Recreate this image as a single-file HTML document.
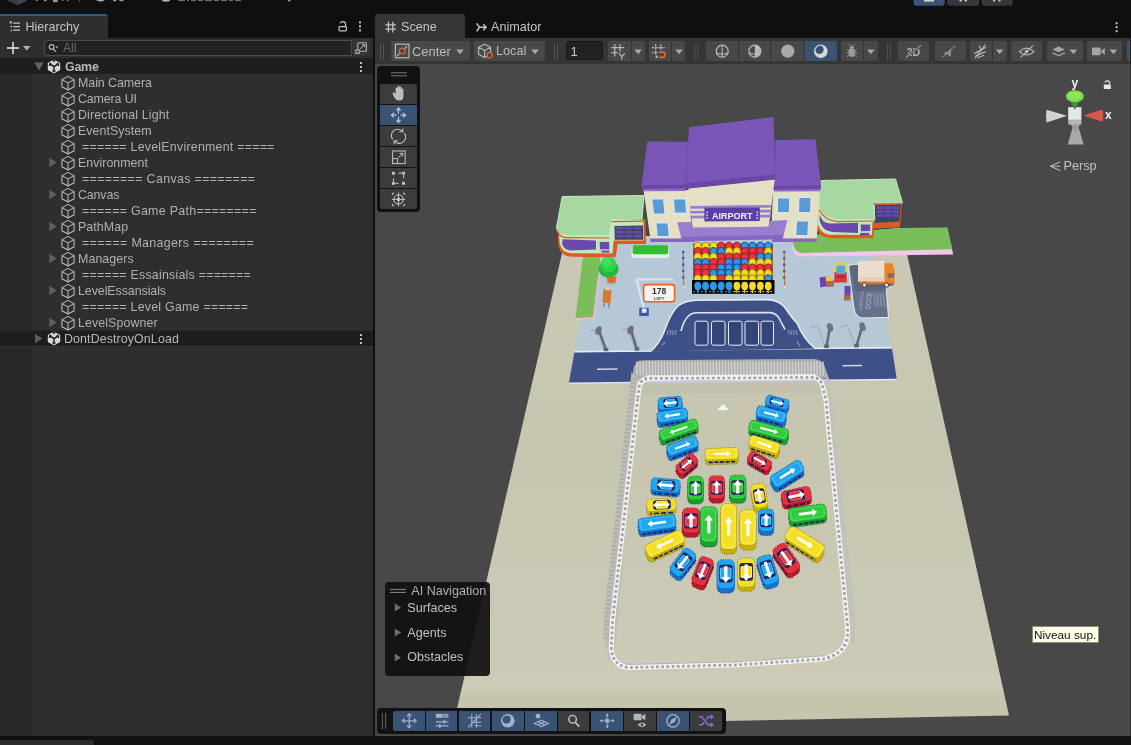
<!DOCTYPE html>
<html lang="en">
<head>
<meta charset="utf-8">
<title>Unity Editor - Scene</title>
<style>
*{box-sizing:border-box;margin:0;padding:0}
html,body{width:1131px;height:745px;overflow:hidden;background:#0f0f0f}
body{position:relative;will-change:transform;font-family:"Liberation Sans",sans-serif;font-size:12px;color:#c4c4c4}
.abs{position:absolute}
svg{position:absolute;left:0;top:0;overflow:visible}
#topbar{left:0;top:0;width:1131px;height:14px;background:#0f0f0f;overflow:hidden}
#hier{left:0;top:14px;width:373px;height:722px;background:#2e2e2e;overflow:hidden}
#hier-tabbar{left:0;top:0;width:373px;height:24px;background:#0f0f0f}
#hier-tab{left:0;top:0;width:108px;height:24px;background:#2e2e2e;border-top:2px solid #2c5d87;border-radius:0 3px 0 0}
#hier-tab span{position:absolute;left:25.4px;top:4px;font-size:12.6px;color:#c4c4c4}
#hier-tools{left:0;top:24px;width:373px;height:20px;background:#2e2e2e}
#search{left:44px;top:2px;width:308px;height:16px;background:#222;border:1px solid #4c4c4c;border-radius:3px 0 0 3px}
#search span{position:absolute;left:18px;top:0px;font-size:12px;color:#6a6a6a;line-height:14px}
#popbtn{left:352.6px;top:1.4px;width:17px;height:16.6px;background:#353535;border-radius:0 3px 3px 0}
#gutter{left:0;top:44px;width:32px;height:679px;background:#282828}
.row{position:absolute;left:0;width:370px;height:16px;line-height:16px;font-size:12.4px;color:#b0b0b0;white-space:pre}
.row.sc{background:#1e1e1e;width:373px;color:#b8b8b8}
.row span{position:absolute;top:1px}
#scene-tabbar{left:375px;top:14px;width:756px;height:24px;background:#0f0f0f}
#scene-tab{left:0;top:0;width:90px;height:24px;background:#353535;border-radius:3px 3px 0 0}
.tabtxt{position:absolute;top:6px;font-size:12.6px;color:#c4c4c4}
#scene-toolbar{left:375px;top:38px;width:756px;height:26px;background:#353535;overflow:hidden}
#scene-view{left:375px;top:64px;width:756px;height:672px;background:#484848;overflow:hidden}
#bottombar{left:0;top:736px;width:1131px;height:9px;background:#111}
#bottombar div{position:absolute;left:0;top:4px;width:94px;height:5px;background:#2c2c2c;border-radius:0 3px 0 0}
.tb{position:absolute;top:3.2px;height:19.6px;background:#484848;border-radius:2px}
.tb.on{background:#3a5273}
.tbtxt{position:absolute;top:2px;font-size:13px;color:#bcbcbc}
.ov{position:absolute;background:#121212;border-radius:4px}
#ainav div{position:absolute;font-size:12.6px;color:#c0c0c0}
#tip{left:1032px;top:626px;width:67px;height:17px;background:#fffde8;border:1px solid #8a8a78;color:#111;font-size:11.8px;line-height:16.4px;text-align:center;white-space:nowrap}

</style>
</head>
<body>
<div id="topbar" class="abs"><svg width="1131" height="14" viewBox="0 0 1131 14"><path d="M8.5 0 L26.5 0 L26.5 1 L17.5 5 L8.5 1 Z" fill="#3d4853"/><path d="M8.5 0 L17.5 0 L17.5 5 L8.5 1 Z" fill="#333c46"/><g fill="#9a9a9a"><rect x="36" y="0" width="1.6" height="1"/><rect x="44" y="0" width="2.6" height="1.2"/><rect x="53" y="0" width="4.6" height="2.2"/><rect x="62" y="0" width="1.2" height="1"/><rect x="67" y="0" width="1.2" height="1.2"/><rect x="79" y="0" width="1" height="1.8" fill="#555"/><path d="M96 0 Q100.5 3 105 0 Z" fill="#b0b0b0"/><rect x="113" y="0" width="3.4" height="1.2"/><rect x="119.4" y="0" width="4" height="1.2"/><path d="M162 0 H170 V1 Q166 2.6 162 1 Z" fill="#b0b0b0"/><rect x="178" y="0" width="7" height="1.1" fill="#6e6e6e"/><rect x="187" y="0" width="2" height="1.1" fill="#6e6e6e"/><rect x="191" y="0" width="5" height="1.1" fill="#6e6e6e"/><rect x="198" y="0" width="5" height="1.1" fill="#6e6e6e"/><rect x="205" y="0" width="7" height="1.1" fill="#6e6e6e"/><rect x="214" y="0" width="5" height="1.1" fill="#6e6e6e"/><rect x="221" y="0" width="6" height="1.1" fill="#6e6e6e"/><rect x="229" y="0" width="4" height="1.1" fill="#6e6e6e"/><rect x="235" y="0" width="6" height="1.1" fill="#6e6e6e"/><rect x="288" y="0" width="2.4" height="1.4"/></g><path d="M913.5 0 L944.7 0 L944.7 2.7 Q944.7 5.7 941.7 5.7 L916.5 5.7 Q913.5 5.7 913.5 2.7 Z" fill="#3a5476"/><path d="M947 0 L979 0 L979 2.7 Q979 5.7 976 5.7 L950 5.7 Q947 5.7 947 2.7 Z" fill="#383838"/><path d="M981.7 0 L1012.7 0 L1012.7 2.7 Q1012.7 5.7 1009.7 5.7 L984.7 5.7 Q981.7 5.7 981.7 2.7 Z" fill="#383838"/><g fill="#d0d0d0"><rect x="924" y="0" width="10" height="1.6"/><rect x="959.5" y="0" width="2.4" height="1.4"/><rect x="964.5" y="0" width="2.4" height="1.4"/><rect x="993" y="0" width="2" height="1.4"/><rect x="998.5" y="0" width="2" height="1.4"/></g></svg></div>
<div id="hier" class="abs">
  <div id="hier-tabbar" class="abs">
    <div id="hier-tab" class="abs"><span>Hierarchy</span></div>
  </div>
  <div id="hier-tools" class="abs">
    <div id="search" class="abs"><span>All</span></div>
    <div id="popbtn" class="abs"></div>
  </div>
  <div id="gutter" class="abs"></div>
  <div class="row sc" style="top:44px"><span class="rt" style="left:65px;font-weight:bold;letter-spacing:-0.209px;">Game</span></div>
<div class="row " style="top:60px"><span class="rt" style="left:78px;letter-spacing:-0.043px;">Main Camera</span></div>
<div class="row " style="top:76px"><span class="rt" style="left:78px;letter-spacing:-0.123px;">Camera UI</span></div>
<div class="row " style="top:92px"><span class="rt" style="left:78px;letter-spacing:0.149px;">Directional Light</span></div>
<div class="row " style="top:108px"><span class="rt" style="left:78px;letter-spacing:0.055px;">EventSystem</span></div>
<div class="row " style="top:124px"><span class="rt" style="left:82px;letter-spacing:0.239px;">====== LevelEnvirenment =====</span></div>
<div class="row " style="top:140px"><span class="rt" style="left:78px;letter-spacing:0.031px;">Environment</span></div>
<div class="row " style="top:156px"><span class="rt" style="left:82px;letter-spacing:0.363px;">======== Canvas ========</span></div>
<div class="row " style="top:172px"><span class="rt" style="left:78px;letter-spacing:-0.119px;">Canvas</span></div>
<div class="row " style="top:188px"><span class="rt" style="left:82px;letter-spacing:0.303px;">====== Game Path========</span></div>
<div class="row " style="top:204px"><span class="rt" style="left:78px;letter-spacing:0.072px;">PathMap</span></div>
<div class="row " style="top:220px"><span class="rt" style="left:82px;letter-spacing:0.363px;">====== Managers ========</span></div>
<div class="row " style="top:236px"><span class="rt" style="left:78px;letter-spacing:0.086px;">Managers</span></div>
<div class="row " style="top:252px"><span class="rt" style="left:82px;letter-spacing:0.233px;">====== Essainsials =======</span></div>
<div class="row " style="top:268px"><span class="rt" style="left:78px;letter-spacing:-0.057px;">LevelEssansials</span></div>
<div class="row " style="top:284px"><span class="rt" style="left:82px;letter-spacing:0.240px;">====== Level Game ======</span></div>
<div class="row " style="top:300px"><span class="rt" style="left:78px;letter-spacing:0.089px;">LevelSpowner</span></div>
<div class="row sc" style="top:316px;border-top:1px solid #2b2b2b;border-bottom:1px solid #343434;height:17px;line-height:14px"><span class="rt" style="left:64px;letter-spacing:0.114px;">DontDestroyOnLoad</span></div>
  <svg width="373" height="723" viewBox="0 0 373 723"><svg x="47" y="45" width="14" height="15" viewBox="0 0 14 15"><path d="M7 0.6 L13.2 4 L13.2 11 L7 14.4 L0.8 11 L0.8 4 Z" fill="#d8d8d8"/><path d="M7 7.5 L7 12.6 M7 7.5 L2.6 5 M7 7.5 L11.4 5" stroke="#1e1e1e" stroke-width="1.5" fill="none"/><path d="M5.4 11.6 L7 12.8 L8.6 11.6 M2.4 7 L2.5 4.9 L4.4 4 M11.6 7 L11.5 4.9 L9.6 4 M5.8 0.8 L7 2.6 L8.2 0.8" stroke="#1e1e1e" stroke-width="1.1" fill="none"/></svg><path d="M34.3 48.6 l9.4 0 l-4.7 8 z" fill="#646464"/><g fill="#c4c4c4"><rect x="360" y="48" width="2" height="2"/><rect x="360" y="52" width="2" height="2"/><rect x="360" y="56" width="2" height="2"/></g><svg x="61" y="61.5" width="14" height="15" viewBox="0 0 14 15"><path d="M7 0.9 L13.1 4.1 L13.1 11.2 L7 14.5 L0.9 11.2 L0.9 4.1 Z M0.9 4.1 L7 7.4 L13.1 4.1 M7 7.4 L7 14.5" fill="none" stroke="#bcbcbc" stroke-width="1.05" stroke-linejoin="round"/></svg><svg x="61" y="77.5" width="14" height="15" viewBox="0 0 14 15"><path d="M7 0.9 L13.1 4.1 L13.1 11.2 L7 14.5 L0.9 11.2 L0.9 4.1 Z M0.9 4.1 L7 7.4 L13.1 4.1 M7 7.4 L7 14.5" fill="none" stroke="#bcbcbc" stroke-width="1.05" stroke-linejoin="round"/></svg><svg x="61" y="93.5" width="14" height="15" viewBox="0 0 14 15"><path d="M7 0.9 L13.1 4.1 L13.1 11.2 L7 14.5 L0.9 11.2 L0.9 4.1 Z M0.9 4.1 L7 7.4 L13.1 4.1 M7 7.4 L7 14.5" fill="none" stroke="#bcbcbc" stroke-width="1.05" stroke-linejoin="round"/></svg><svg x="61" y="109.5" width="14" height="15" viewBox="0 0 14 15"><path d="M7 0.9 L13.1 4.1 L13.1 11.2 L7 14.5 L0.9 11.2 L0.9 4.1 Z M0.9 4.1 L7 7.4 L13.1 4.1 M7 7.4 L7 14.5" fill="none" stroke="#bcbcbc" stroke-width="1.05" stroke-linejoin="round"/></svg><svg x="61" y="125.5" width="14" height="15" viewBox="0 0 14 15"><path d="M7 0.9 L13.1 4.1 L13.1 11.2 L7 14.5 L0.9 11.2 L0.9 4.1 Z M0.9 4.1 L7 7.4 L13.1 4.1 M7 7.4 L7 14.5" fill="none" stroke="#bcbcbc" stroke-width="1.05" stroke-linejoin="round"/></svg><svg x="61" y="141.5" width="14" height="15" viewBox="0 0 14 15"><path d="M7 0.9 L13.1 4.1 L13.1 11.2 L7 14.5 L0.9 11.2 L0.9 4.1 Z M0.9 4.1 L7 7.4 L13.1 4.1 M7 7.4 L7 14.5" fill="none" stroke="#bcbcbc" stroke-width="1.05" stroke-linejoin="round"/></svg><path d="M49.4 143.7 l0 9.6 l7.4 -4.8 z" fill="#5e5e5e"/><svg x="61" y="157.5" width="14" height="15" viewBox="0 0 14 15"><path d="M7 0.9 L13.1 4.1 L13.1 11.2 L7 14.5 L0.9 11.2 L0.9 4.1 Z M0.9 4.1 L7 7.4 L13.1 4.1 M7 7.4 L7 14.5" fill="none" stroke="#bcbcbc" stroke-width="1.05" stroke-linejoin="round"/></svg><svg x="61" y="173.5" width="14" height="15" viewBox="0 0 14 15"><path d="M7 0.9 L13.1 4.1 L13.1 11.2 L7 14.5 L0.9 11.2 L0.9 4.1 Z M0.9 4.1 L7 7.4 L13.1 4.1 M7 7.4 L7 14.5" fill="none" stroke="#bcbcbc" stroke-width="1.05" stroke-linejoin="round"/></svg><path d="M49.4 175.7 l0 9.6 l7.4 -4.8 z" fill="#5e5e5e"/><svg x="61" y="189.5" width="14" height="15" viewBox="0 0 14 15"><path d="M7 0.9 L13.1 4.1 L13.1 11.2 L7 14.5 L0.9 11.2 L0.9 4.1 Z M0.9 4.1 L7 7.4 L13.1 4.1 M7 7.4 L7 14.5" fill="none" stroke="#bcbcbc" stroke-width="1.05" stroke-linejoin="round"/></svg><svg x="61" y="205.5" width="14" height="15" viewBox="0 0 14 15"><path d="M7 0.9 L13.1 4.1 L13.1 11.2 L7 14.5 L0.9 11.2 L0.9 4.1 Z M0.9 4.1 L7 7.4 L13.1 4.1 M7 7.4 L7 14.5" fill="none" stroke="#bcbcbc" stroke-width="1.05" stroke-linejoin="round"/></svg><path d="M49.4 207.7 l0 9.6 l7.4 -4.8 z" fill="#5e5e5e"/><svg x="61" y="221.5" width="14" height="15" viewBox="0 0 14 15"><path d="M7 0.9 L13.1 4.1 L13.1 11.2 L7 14.5 L0.9 11.2 L0.9 4.1 Z M0.9 4.1 L7 7.4 L13.1 4.1 M7 7.4 L7 14.5" fill="none" stroke="#bcbcbc" stroke-width="1.05" stroke-linejoin="round"/></svg><svg x="61" y="237.5" width="14" height="15" viewBox="0 0 14 15"><path d="M7 0.9 L13.1 4.1 L13.1 11.2 L7 14.5 L0.9 11.2 L0.9 4.1 Z M0.9 4.1 L7 7.4 L13.1 4.1 M7 7.4 L7 14.5" fill="none" stroke="#bcbcbc" stroke-width="1.05" stroke-linejoin="round"/></svg><path d="M49.4 239.7 l0 9.6 l7.4 -4.8 z" fill="#5e5e5e"/><svg x="61" y="253.5" width="14" height="15" viewBox="0 0 14 15"><path d="M7 0.9 L13.1 4.1 L13.1 11.2 L7 14.5 L0.9 11.2 L0.9 4.1 Z M0.9 4.1 L7 7.4 L13.1 4.1 M7 7.4 L7 14.5" fill="none" stroke="#bcbcbc" stroke-width="1.05" stroke-linejoin="round"/></svg><svg x="61" y="269.5" width="14" height="15" viewBox="0 0 14 15"><path d="M7 0.9 L13.1 4.1 L13.1 11.2 L7 14.5 L0.9 11.2 L0.9 4.1 Z M0.9 4.1 L7 7.4 L13.1 4.1 M7 7.4 L7 14.5" fill="none" stroke="#bcbcbc" stroke-width="1.05" stroke-linejoin="round"/></svg><path d="M49.4 271.7 l0 9.6 l7.4 -4.8 z" fill="#5e5e5e"/><svg x="61" y="285.5" width="14" height="15" viewBox="0 0 14 15"><path d="M7 0.9 L13.1 4.1 L13.1 11.2 L7 14.5 L0.9 11.2 L0.9 4.1 Z M0.9 4.1 L7 7.4 L13.1 4.1 M7 7.4 L7 14.5" fill="none" stroke="#bcbcbc" stroke-width="1.05" stroke-linejoin="round"/></svg><svg x="61" y="301.5" width="14" height="15" viewBox="0 0 14 15"><path d="M7 0.9 L13.1 4.1 L13.1 11.2 L7 14.5 L0.9 11.2 L0.9 4.1 Z M0.9 4.1 L7 7.4 L13.1 4.1 M7 7.4 L7 14.5" fill="none" stroke="#bcbcbc" stroke-width="1.05" stroke-linejoin="round"/></svg><path d="M49.4 303.7 l0 9.6 l7.4 -4.8 z" fill="#5e5e5e"/><svg x="47" y="317" width="14" height="15" viewBox="0 0 14 15"><path d="M7 0.6 L13.2 4 L13.2 11 L7 14.4 L0.8 11 L0.8 4 Z" fill="#d8d8d8"/><path d="M7 7.5 L7 12.6 M7 7.5 L2.6 5 M7 7.5 L11.4 5" stroke="#1e1e1e" stroke-width="1.5" fill="none"/><path d="M5.4 11.6 L7 12.8 L8.6 11.6 M2.4 7 L2.5 4.9 L4.4 4 M11.6 7 L11.5 4.9 L9.6 4 M5.8 0.8 L7 2.6 L8.2 0.8" stroke="#1e1e1e" stroke-width="1.1" fill="none"/></svg><path d="M35.0 319.7 l0 9.6 l7.4 -4.8 z" fill="#5e5e5e"/><g fill="#c4c4c4"><rect x="360" y="320" width="2" height="2"/><rect x="360" y="324" width="2" height="2"/><rect x="360" y="328" width="2" height="2"/></g></svg>
  <svg width="373" height="60" viewBox="0 14 373 60"><g stroke="#c4c4c4" stroke-width="1.15" fill="none"><path d="M13.2 23.1 H20 M13.2 26.6 H20 M13.2 30.1 H20"/></g><g fill="#c4c4c4"><rect x="10" y="21.2" width="1.6" height="1.6"/><rect x="9.4" y="22.4" width="2.8" height="1"/><rect x="10.6" y="25.8" width="1.5" height="1.5"/><rect x="10.6" y="29.8" width="1.5" height="1.5"/></g><path d="M345.6 26.5 V24.3 Q345.6 21.6 343 21.6 Q340.6 21.6 340.2 23.4" fill="none" stroke="#c4c4c4" stroke-width="1.2"/><rect x="339" y="26.6" width="7.4" height="4.2" rx=".8" fill="none" stroke="#c4c4c4" stroke-width="1.2"/><g fill="#c4c4c4"><rect x="359" y="21.4" width="2" height="2"/><rect x="359" y="25.4" width="2" height="2"/><rect x="359" y="29.4" width="2" height="2"/></g><path d="M7 48 H19 M13 42 V54" stroke="#c8c8c8" stroke-width="1.8"/><path d="M23 46 H30.5 L26.8 50.5 Z" fill="#b0b0b0"/><circle cx="51.6" cy="47" r="2.4" fill="none" stroke="#b8b8b8" stroke-width="1.2"/><path d="M53.4 49 L56 51.8" stroke="#b8b8b8" stroke-width="1.2"/><path d="M55.4 46.6 H58.4 L56.9 48.6 Z" fill="#b8b8b8"/><rect x="357.8" y="42.7" width="8.6" height="8.6" rx="1" fill="none" stroke="#b4b4b4" stroke-width="1.1"/><rect x="355.8" y="50" width="3.4" height="3.4" fill="#343434" stroke="#b4b4b4" stroke-width="1.1"/><path d="M360 49.2 L364.4 44.8 M362 44.6 H364.6 V47.2" fill="none" stroke="#b4b4b4" stroke-width="1"/></svg>
</div>
<div id="scene-tabbar" class="abs">
  <div id="scene-tab" class="abs"></div>
  <span class="tabtxt" style="left:26px">Scene</span>
  <span class="tabtxt" style="left:116px">Animator</span>
  <svg width="756" height="24" viewBox="375 13.2 756 24"><path d="M388.4 21 V31.6 M392.8 21 V31.6 M385.4 24 H396 M385.4 28.4 H396" stroke="#c4c4c4" stroke-width="1.25" fill="none"/><path d="M476.6 22.6 L479.6 26.4 L476.6 30.4 M479.6 26.4 H486 M483.2 23.4 L486 26.4 L483.2 29.4" stroke="#c4c4c4" stroke-width="1.5" fill="none"/><g fill="#c4c4c4"><rect x="1115.6" y="21.4" width="2" height="2"/><rect x="1115.6" y="25.4" width="2" height="2"/><rect x="1115.6" y="29.4" width="2" height="2"/></g></svg>
</div>
<div id="scene-toolbar" class="abs"><div class="tb" style="left:16.4px;width:78.6px;border-radius:2px 2px 2px 2px"></div>
<div class="tb" style="left:99px;width:71px;border-radius:2px 2px 2px 2px"></div>
<div class="tb" style="left:233px;width:22.6px;border-radius:2px 0px 0px 2px"></div>
<div class="tb" style="left:256.6px;width:13.2px;border-radius:0px 2px 2px 0px"></div>
<div class="tb" style="left:273.6px;width:22.7px;border-radius:2px 0px 0px 2px"></div>
<div class="tb" style="left:297.3px;width:13.2px;border-radius:0px 2px 2px 0px"></div>
<div class="tb" style="left:331px;width:32.3px;border-radius:2px 0px 0px 2px"></div>
<div class="tb" style="left:364.3px;width:31.1px;border-radius:0px 0px 0px 0px"></div>
<div class="tb" style="left:396.4px;width:32.5px;border-radius:0px 0px 0px 0px"></div>
<div class="tb on" style="left:429.9px;width:32px;border-radius:0px 2px 2px 0px"></div>
<div class="tb" style="left:466px;width:21.6px;border-radius:2px 0px 0px 2px"></div>
<div class="tb" style="left:488.6px;width:14.4px;border-radius:0px 2px 2px 0px"></div>
<div class="tb" style="left:523.2px;width:31.3px;border-radius:2px 2px 2px 2px"></div>
<div class="tb" style="left:559.6px;width:31px;border-radius:2px 2px 2px 2px"></div>
<div class="tb" style="left:594.6px;width:22px;border-radius:2px 0px 0px 2px"></div>
<div class="tb" style="left:617.6px;width:14.1px;border-radius:0px 2px 2px 0px"></div>
<div class="tb" style="left:636px;width:31.4px;border-radius:2px 2px 2px 2px"></div>
<div class="tb" style="left:672px;width:35.8px;border-radius:2px 2px 2px 2px"></div>
<div class="tb" style="left:711.8px;width:35.4px;border-radius:2px 2px 2px 2px"></div>
<div class="tb on" style="left:752px;width:3px;border-radius:2px 0 0 2px"></div>
<div class="abs" style="left:755px;top:0;width:1px;height:26px;background:#222"></div>
<div class="abs" style="left:190.9px;top:3.2px;width:37px;height:19.3px;background:#222;border:1px solid #161616;border-radius:3px"></div>
<span class="tbtxt" style="left:195.5px;top:6px;color:#c8c8c8">1</span>
<span class="tbtxt" style="left:37px;top:5.6px;font-size:12.9px">Center</span>
<span class="tbtxt" style="left:121px;top:5.8px;font-size:12.7px">Local</span><svg width="756" height="26" viewBox="375 37.8 756 26"><path d="M380.5 43 V60 M383.5 43 V60" stroke="#525252" stroke-width="1"/><path d="M554.5 43 V60 M557.5 43 V60" stroke="#525252" stroke-width="1"/><path d="M694.8 43 V60 M697.8 43 V60" stroke="#525252" stroke-width="1"/><path d="M887.6 43 V60 M890.6 43 V60" stroke="#525252" stroke-width="1"/><rect x="395.4" y="44" width="13.6" height="13.6" fill="none" stroke="#b8b8b8" stroke-width="1.2"/><circle cx="402.2" cy="50.8" r="2.9" fill="none" stroke="#e0632f" stroke-width="1.3"/><path d="M397.2 55.8 L399.8 53.2 M404.6 48.4 L407.2 45.8" stroke="#b8b8b8" stroke-width="1.1"/><path d="M456.2 49.4 h7.6 l-3.8 4.6 z" fill="#a8a8a8"/><path d="M484.6 44 L490.6 47 V54 L484.6 57.4 L478.6 54 V47 Z M478.6 47 L484.6 50.2 L490.6 47 M484.6 50.2 V57.4" fill="none" stroke="#b8b8b8" stroke-width="1.1" stroke-linejoin="round"/><circle cx="489.6" cy="55" r="2.6" fill="#474747" stroke="#e0632f" stroke-width="1.3"/><path d="M531.2 49.4 h7.6 l-3.8 4.6 z" fill="#a8a8a8"/><path d="M614.8 44 V56.4 M620 44 V51.6 M611.4 47.4 H624.2 M611.4 52.4 H617.6" stroke="#b8b8b8" stroke-width="1.25" fill="none"/><path d="M618.8 53 L621.8 56.4 L624.8 53 M621.8 56.4 V59.6" stroke="#b8b8b8" stroke-width="1.25" fill="none"/><path d="M634.4 49.4 h7.6 l-3.8 4.6 z" fill="#a8a8a8"/><path d="M655.6 44 V54.6 M660.8 44 V50.4 M652 47.4 H665 M652 52.4 H657.6" stroke="#b8b8b8" stroke-width="1.25" fill="none" stroke-dasharray="2.2 0.9"/><path d="M659 52 H662.4 Q665.2 52 665.2 54.6 Q665.2 57.2 662.4 57.2 H659" stroke="#e0632f" stroke-width="1.7" fill="none"/><rect x="655.6" y="55.4" width="2.2" height="2.2" fill="#b8b8b8"/><path d="M675.2 49.4 h7.6 l-3.8 4.6 z" fill="#a8a8a8"/><circle cx="722.2" cy="51" r="6" fill="none" stroke="#b8b8b8" stroke-width="1.2"/><path d="M722.2 45 V57 M716.4 52.6 Q722.2 55.4 728 52.6" stroke="#b8b8b8" stroke-width="1.1" fill="none"/><circle cx="754.8" cy="51" r="6" fill="none" stroke="#b8b8b8" stroke-width="1.2"/><path d="M754.8 45 A6 6 0 0 1 754.8 57 Z" fill="#b8b8b8"/><path d="M749 52.6 Q754.8 55.4 760.6 52.6" stroke="#b8b8b8" stroke-width="1.1" fill="none"/><circle cx="787.8" cy="51" r="6.6" fill="#a8a8a8"/><circle cx="820.8" cy="51" r="6.2" fill="#d8d8d8"/><circle cx="819.4" cy="49.4" r="4.3" fill="#3a5273"/><circle cx="820.8" cy="51" r="6.2" fill="none" stroke="#d8d8d8" stroke-width="1.2"/><ellipse cx="851.8" cy="52.4" rx="3.4" ry="4.4" fill="#9a9a9a"/><circle cx="851.8" cy="47.4" r="2" fill="#9a9a9a"/><path d="M847 49 L849 50.6 M856.6 49 L854.6 50.6 M846.4 52.6 H848.6 M857.2 52.6 H855 M847 56.6 L849 55 M856.6 56.6 L854.6 55 M849.8 45 L848.8 43.8 M853.8 45 L854.8 43.8" stroke="#9a9a9a" stroke-width="1"/><path d="M867 49.4 h7.6 l-3.8 4.6 z" fill="#a8a8a8"/><text x="906.6" y="55.4" font-family="Liberation Sans, sans-serif" font-size="10.6" font-weight="bold" fill="#b8b8b8">2D</text><path d="M905.6 57.6 L921.6 44.6" stroke="#474747" stroke-width="2.6"/><path d="M906 57.4 L921 45" stroke="#b8b8b8" stroke-width="1"/><path d="M944.6 51.8 H947 L951 48.4 V56.8 L947 54 H944.6 Z" fill="#8a8a8a"/><path d="M942.6 57 L955.4 45.4" stroke="#8a8a8a" stroke-width="1.1"/><path d="M974.4 53.4 L986 47 M975.4 56 L985.6 51.4 M977.4 57.6 L984 55" stroke="#b8b8b8" stroke-width="1.2"/><path d="M979 45.2 L981.4 50 M985.4 44.4 L975 58" stroke="#b8b8b8" stroke-width="1.1"/><path d="M995.8 49.4 h7.6 l-3.8 4.6 z" fill="#a8a8a8"/><path d="M1019.4 51.4 Q1026.6 44.6 1034 51.4 Q1026.6 58 1019.4 51.4 Z" fill="none" stroke="#b8b8b8" stroke-width="1.2"/><circle cx="1026.6" cy="51.4" r="1.8" fill="#b8b8b8"/><path d="M1020.6 57.2 L1033 45.4" stroke="#b8b8b8" stroke-width="1.2"/><path d="M1058.6 46.4 L1064.8 49.2 L1058.6 52 L1052.4 49.2 Z" fill="#a6a6a6"/><path d="M1052.4 52.6 L1058.6 55.4 L1064.8 52.6" fill="none" stroke="#a6a6a6" stroke-width="1.4"/><path d="M1069.6 49.4 h7.6 l-3.8 4.6 z" fill="#a8a8a8"/><rect x="1092" y="47.4" width="8.6" height="7.6" rx="1" fill="#a6a6a6"/><path d="M1101.4 50.2 L1104.8 47.8 V54.6 L1101.4 52.2 Z" fill="#a6a6a6"/><path d="M1109.6 49.4 h7.6 l-3.8 4.6 z" fill="#a8a8a8"/></svg></div>
<div id="scene-view" class="abs">
<svg width="756" height="673" viewBox="375 64 756 673">
<defs><linearGradient id="gnd" x1="0" y1="0" x2="0" y2="1"><stop offset="0" stop-color="#c9c8b4"/><stop offset="0.45" stop-color="#c6c6b0"/><stop offset="0.75" stop-color="#cac9b5"/><stop offset="0.925" stop-color="#cdcbb8"/><stop offset="0.94" stop-color="#c6c5ae"/><stop offset="1" stop-color="#c4c3ab"/></linearGradient></defs>
<polygon points="566,236 903,236 1009,715.5 453,726" fill="url(#gnd)" />
<polygon points="599.3,240 870,240 892,347.5 574.4,351" fill="#b6c7d5" />
<polygon points="583,256 602,256 595,319 575,320" fill="#f0b6e2" />
<polygon points="583,256 600.5,256 593,317 575.5,318" fill="#7abe5a" />
<polygon points="574.4,352.2 892,348.3 896.8,379.6 568.8,383.2" fill="#3e5088" />
<path d="M651 351.5 Q659 344 664 332 Q671 312 678 306 Q685 300.3 697 300.2 L768 300 Q780 300.5 786 309 Q792 318 797 323 Q804 340 815 348.5 Z" fill="#3e5088"/>
<path d="M574.4 351.6 L651 351 Q659 344 664 332 Q671 312 678 306 Q685 300.3 697 300.2 L768 299.6 Q780 300 786 309 Q792 318 797 323 Q804 340 815 348.2 L892 347.6" fill="none" stroke="#e4ebf2" stroke-width="1.6"/>
<path d="M681 331 Q684 320 688 316.5 Q691 313 697 312.8 L770 312.6 Q776 313 779 318 Q782 324 785 329.5" fill="none" stroke="#dfe6ee" stroke-width="1.6"/>
<path d="M568.8 383.2 L633 382.5" stroke="#dde3ee" stroke-width="1.6"/>
<path d="M829 380.3 L896.8 379.6" stroke="#dde3ee" stroke-width="1.6"/>
<path d="M597 369.2 L617.5 369" stroke="#cfd6e6" stroke-width="1.6"/>
<path d="M842.5 365.8 L862 365.5" stroke="#cfd6e6" stroke-width="1.6"/>
<rect x="695" y="321.2" width="13" height="24" rx="2" fill="#33447a" stroke="#e8edf5" stroke-width="1"/>
<rect x="711.5" y="321.2" width="13.5" height="24" rx="2" fill="#33447a" stroke="#e8edf5" stroke-width="1"/>
<rect x="728.5" y="321.2" width="13.5" height="24" rx="2" fill="#33447a" stroke="#e8edf5" stroke-width="1"/>
<rect x="745" y="321.2" width="13.5" height="24" rx="2" fill="#33447a" stroke="#e8edf5" stroke-width="1"/>
<rect x="761" y="321.2" width="12.5" height="24" rx="2" fill="#33447a" stroke="#e8edf5" stroke-width="1"/>
<path d="M667 335 l1.5 -5" stroke="#8f9cc4" stroke-width="1"/>
<path d="M789.5 335 l-1.5 -5" stroke="#8f9cc4" stroke-width="1"/>
<path d="M669.6 335 l1.5 -5" stroke="#8f9cc4" stroke-width="1"/>
<path d="M792.1 335 l-1.5 -5" stroke="#8f9cc4" stroke-width="1"/>
<path d="M672.2 335 l1.5 -5" stroke="#8f9cc4" stroke-width="1"/>
<path d="M794.7 335 l-1.5 -5" stroke="#8f9cc4" stroke-width="1"/>
<path d="M674.8 335 l1.5 -5" stroke="#8f9cc4" stroke-width="1"/>
<path d="M797.3 335 l-1.5 -5" stroke="#8f9cc4" stroke-width="1"/>
<path d="M662 345 l3.5 -3" stroke="#7f8cb8" stroke-width="1.4"/><path d="M797 342 l3 4" stroke="#7f8cb8" stroke-width="1.4"/>
<path d="M796 238 L900 228 L947.2 227.8 L953.2 254.6 L800 256.4 Q793 256 792 246 Z" fill="#f5c6ec"/>
<path d="M796 236 L900 228 L947.2 227.8 L952.4 249.2 L801 253 Q794 252 793 243 Z" fill="#79be59"/>
<path d="M557.5 228 L558.5 246 Q561 256.5 572 256.8 L615.7 257.2 L617.6 244 L646 244 L645.5 219 L611 219 Z" fill="#df5a20"/>
<path d="M558.5 229 L559.8 244 Q562 252.8 572 253.2 L612.6 253.6 L613.6 240.5 L643.5 240.5 L643.5 220 L611 220 Z" fill="#c3e8bd"/>
<path d="M562.6 239.2 L596 240.6 L596 249.4 L570 250.4 Q563.5 249.5 562.2 243.8 Z" fill="#6c49ae"/>
<path d="M599.8 241.9 L609.2 241.9 L609.2 249.4 L599.8 249.4 Z" fill="#6c49ae"/>
<path d="M601.6 250.6 L609.4 250.6 L609.4 252.6 L601.6 252.6 Z" fill="#6c49ae"/>
<polygon points="614.5,226 643,225.5 643,239.8 614.8,239.8" fill="#3a4660" />
<rect x="616" y="226.8" width="7.6" height="2.6" fill="#6c49ae"/>
<rect x="624.8" y="226.8" width="7.6" height="2.6" fill="#6c49ae"/>
<rect x="633.6" y="226.8" width="7.6" height="2.6" fill="#6c49ae"/>
<rect x="616" y="230.8" width="7.6" height="2.6" fill="#6c49ae"/>
<rect x="624.8" y="230.8" width="7.6" height="2.6" fill="#6c49ae"/>
<rect x="633.6" y="230.8" width="7.6" height="2.6" fill="#6c49ae"/>
<rect x="616" y="234.8" width="7.6" height="2.6" fill="#6c49ae"/>
<rect x="624.8" y="234.8" width="7.6" height="2.6" fill="#6c49ae"/>
<rect x="633.6" y="234.8" width="7.6" height="2.6" fill="#6c49ae"/>
<path d="M562.2 196.5 L644 195.5 L642 219 L611.5 219.6 L609.5 235.8 L566 235.2 Q556.5 234.5 556.6 227 Z" fill="#a7d8a1" stroke="#c3e8bd" stroke-width="1"/>
<path d="M557.5 231 Q559 237.5 567 237.6 L609.5 238" fill="none" stroke="#df5a20" stroke-width="1.2"/>
<path d="M611.5 221.6 L643.5 221.2" fill="none" stroke="#df5a20" stroke-width="1.2"/>
<path d="M817 207 L816.5 227 Q819 238 830 238.2 L873.5 238.2 L873.5 228 L900 226 L902 203 Z" fill="#df5a20"/>
<path d="M818.5 207 L818 224.5 Q821 234 830 234.8 L871.8 235 L872.5 222 L897.5 220 L901 203 Z" fill="#c3e8bd"/>
<polygon points="875,204.5 901,204 899,223.5 874.5,224.5" fill="#3a4660" />
<polygon points="874,223 899.5,221.5 899.3,227.6 874,228.6" fill="#df5a20" />
<rect x="876.5" y="206.4" width="6.8" height="2.6" fill="#6c49ae"/>
<rect x="884.3" y="206.4" width="6.8" height="2.6" fill="#6c49ae"/>
<rect x="892.1" y="206.4" width="6.8" height="2.6" fill="#6c49ae"/>
<rect x="876.5" y="210.3" width="6.8" height="2.6" fill="#6c49ae"/>
<rect x="884.3" y="210.3" width="6.8" height="2.6" fill="#6c49ae"/>
<rect x="892.1" y="210.3" width="6.8" height="2.6" fill="#6c49ae"/>
<rect x="876.5" y="214.2" width="6.8" height="2.6" fill="#6c49ae"/>
<rect x="884.3" y="214.2" width="6.8" height="2.6" fill="#6c49ae"/>
<rect x="892.1" y="214.2" width="6.8" height="2.6" fill="#6c49ae"/>
<path d="M819.7 215 L822.3 220 Q825 223.4 831 223.6 L858 222.7 L858 233 L832.6 232.1 Q825.5 231 822.2 226.5 Q819.9 223 819.7 220.8 Z" fill="#6c49ae"/>
<path d="M860.8 224.6 L870.2 224.4 L870.2 231 L860.8 231.2 Z" fill="#6c49ae"/>
<path d="M860 233 L869.3 232.8 L869.3 235.2 L860 235.4 Z" fill="#6c49ae"/>
<path d="M821 180.5 L895.5 179 L902.5 203 L873 203.3 L875 219.2 L840 220 Q824 219 819 207.5 Z" fill="#a7d8a1" stroke="#c3e8bd" stroke-width="1"/>
<path d="M819.5 210 Q824 220.5 838 221.6 L874.5 221" fill="none" stroke="#df5a20" stroke-width="1.2"/>
<path d="M873.5 204.3 L902 203.8" fill="none" stroke="#df5a20" stroke-width="1.4"/>
<polygon points="643.5,190 690,190 692,240 650.5,240" fill="#e3e0c5" />
<polygon points="773,190 820,190 816.7,240 771,240" fill="#e3e0c5" />
<polygon points="650,238.4 695,238.4 695,242 650.6,242" fill="#8565c2" />
<polygon points="772,238.4 817,238.4 816.6,241.8 772,242" fill="#8565c2" />
<polygon points="651.3,198.3 664.2,198.3 665.7,214.7 652.8,214.7" fill="#dbe6ee" />
<polygon points="652.5,199.5 663,199.5 664.5,213.5 654,213.5" fill="#5b9bd5" />
<polygon points="672.8,198.3 686.2,198.3 687.2,213.7 673.8,213.7" fill="#dbe6ee" />
<polygon points="674,199.5 685,199.5 686,212.5 675,212.5" fill="#5b9bd5" />
<polygon points="655.3,222.3 668.7,222.3 669.9,237.2 656.5,237.2" fill="#dbe6ee" />
<polygon points="656.5,223.5 667.5,223.5 668.7,236 657.7,236" fill="#5b9bd5" />
<polygon points="776.8,197.3 790.2,197.3 790.2,213.2 776.8,213.2" fill="#dbe6ee" />
<polygon points="778,198.5 789,198.5 789,212 778,212" fill="#5b9bd5" />
<polygon points="798.3,196.8 811.7,196.8 811.2,213.2 797.8,213.2" fill="#dbe6ee" />
<polygon points="799.5,198 810.5,198 810,212 799,212" fill="#5b9bd5" />
<polygon points="795.8,220.3 809.2,220.3 808.5,236.2 795.1,236.2" fill="#dbe6ee" />
<polygon points="797,221.5 808,221.5 807.3,235 796.3,235" fill="#5b9bd5" />
<polygon points="641.5,185 686,184.3 686,191 643.2,191.3" fill="#8a6cc6" />
<polygon points="641.5,185 686,184.3 686,188.4 642.3,188.9" fill="#6a47a6" />
<polygon points="647.3,141.6 688.3,141.8 685.6,184.4 641.5,185.2" fill="#7b56b9" />
<polygon points="774,186 821,185.1 820.2,191.2 774,191.6" fill="#8a6cc6" />
<polygon points="774,186 821,185.1 820.6,189 774,189.5" fill="#6a47a6" />
<polygon points="775.4,140 815.4,139.2 821,185.2 774,186.2" fill="#7b56b9" />
<polygon points="688.4,188 774.8,179 768.6,228 692.6,229" fill="#e3e0c5" />
<polygon points="690.2,206.1 771.4,204.9 771,207.6 690.6,208.8" fill="#9a7dd0" />
<polygon points="690.2,210.9 771.4,209.7 771,212.4 690.6,213.6" fill="#9a7dd0" />
<polygon points="690.2,215.8 771.4,214.6 771,217.4 690.6,218.6" fill="#9a7dd0" />
<polygon points="704.4,207.8 759.8,207.4 759.8,221 704.4,221.4" fill="#5b3fa8" />
<text x="732.3" y="219.1" font-family="Liberation Sans, sans-serif" font-weight="bold" font-size="9.4" fill="#f4f0ff" text-anchor="middle" textLength="40.5" lengthAdjust="spacingAndGlyphs">AIRPORT</text>
<g fill="#e8e0ff"><rect x="706.4" y="211.6" width="1.4" height="1.5"/><rect x="706.4" y="214.4" width="1.4" height="1.5"/><rect x="706.4" y="217.2" width="1.4" height="1.5"/><rect x="756.5" y="211.6" width="1.4" height="1.5"/><rect x="756.5" y="214.4" width="1.4" height="1.5"/><rect x="756.5" y="217.2" width="1.4" height="1.5"/></g>
<polygon points="677.2,222.3 691.9,222 692.7,227.6 768.6,226.6 769.4,221 787.4,219.9 782.7,239 682.2,241.2" fill="#9a7dd0" />
<polygon points="681.2,237 783.3,234.8 782.7,239 682.2,241.2" fill="#8566c4" />
<polygon points="685.3,183.2 775.5,174.2 775.4,179.6 686.6,188.8" fill="#6a47a6" />
<polygon points="689,127.3 773.5,117.1 775.5,174.4 685.3,183.4" fill="#7b56b9" />
<path d="M688.3 141.8 L685.6 183" stroke="#6e4bac" stroke-width="1" fill="none"/>
<path d="M775.2 140 L775.5 174" stroke="#6e4bac" stroke-width="1" fill="none"/>
<rect x="631.5" y="246" width="37.5" height="12" rx="2" fill="#e4ebe8"/>
<rect x="632.6" y="245.2" width="35.6" height="9" rx="2" fill="#2fbf30"/>
<ellipse cx="611.5" cy="282.5" rx="5.5" ry="2.6" fill="#a9b8c6"/>
<path d="M606.5 276.5 L616.5 276.5 L615.5 282 Q611.5 284.5 607.5 282 Z" fill="#e0701f"/>
<ellipse cx="608.5" cy="269" rx="10.2" ry="8.6" fill="#27b73f"/>
<ellipse cx="608.3" cy="264.5" rx="8" ry="7.8" fill="#30d24c"/>
<ellipse cx="607" cy="262" rx="5" ry="4.5" fill="#3fe05c"/>
<polygon points="603.5,288.5 611.5,289.5 610.5,303.5 602.5,302.5" fill="#d27a30" />
<polygon points="605,287.5 610.5,288 610.3,290.5 605,290" fill="#c8ccd6" />
<path d="M604 303 L604 307 M609 303.6 L609 307.6" stroke="#7a6a8a" stroke-width="1.2"/>
<path d="M636.5 279.3 L673 279.3" stroke="#cfe0f0" stroke-width="2.6"/>
<path d="M636.6 279.5 L644.2 309.5" stroke="#d6e4f2" stroke-width="2.4"/>
<polygon points="639.2,307.8 648.8,307.8 648.8,316 639.2,316" fill="#3d56a8" />
<polygon points="641.8,308.5 646.6,308.5 646.6,312.8 641.8,312.8" fill="#dfe8f6" />
<rect x="643.6" y="284.6" width="31" height="17.2" rx="2.5" fill="#f6f3ee" stroke="#e8641c" stroke-width="1.6"/>
<text x="659.2" y="294" font-family="Liberation Sans, sans-serif" font-weight="bold" font-size="8.6" fill="#333" text-anchor="middle">178</text>
<text x="659.2" y="299.8" font-family="Liberation Sans, sans-serif" font-weight="bold" font-size="4.2" fill="#555" text-anchor="middle">LEFT</text>
<path d="M604 349 l-7 -20 l-7 2" stroke="#a4b3c2" stroke-width="1.4" fill="none"/>
<path d="M606 350 L598.5 329" stroke="#666c70" stroke-width="2.6"/>
<ellipse cx="598.5" cy="330.5" rx="3" ry="4.4" fill="#6e7478" transform="rotate(20 598.5 330.5)"/>
<rect x="603.7" y="347.8" width="4.6" height="3.4" fill="#5e6468"/>
<path d="M635 348.5 l-7 -20 l-7 2" stroke="#a4b3c2" stroke-width="1.4" fill="none"/>
<path d="M637 349.5 L630.5 328.5" stroke="#666c70" stroke-width="2.6"/>
<ellipse cx="630.5" cy="330" rx="3" ry="4.4" fill="#6e7478" transform="rotate(20 630.5 330)"/>
<rect x="634.7" y="347.3" width="4.6" height="3.4" fill="#5e6468"/>
<path d="M824.5 345.8 l-7 -20 l-7 2" stroke="#a4b3c2" stroke-width="1.4" fill="none"/>
<path d="M826.5 346.8 L830 325.8" stroke="#666c70" stroke-width="2.6"/>
<ellipse cx="830" cy="327.3" rx="3" ry="4.4" fill="#6e7478" transform="rotate(-20 830 327.3)"/>
<rect x="824.2" y="344.6" width="4.6" height="3.4" fill="#5e6468"/>
<path d="M854.5 345.2 l-7 -20 l-7 2" stroke="#a4b3c2" stroke-width="1.4" fill="none"/>
<path d="M856.5 346.2 L862.5 325.2" stroke="#666c70" stroke-width="2.6"/>
<ellipse cx="862.5" cy="326.7" rx="3" ry="4.4" fill="#6e7478" transform="rotate(-20 862.5 326.7)"/>
<rect x="854.2" y="344" width="4.6" height="3.4" fill="#5e6468"/>
<path d="M683.2 251.5 L683.6 287" stroke="#c77a3a" stroke-width="1.3"/>
<circle cx="683.2" cy="252" r="1.3" fill="#2b5fd0"/>
<circle cx="683.2" cy="258" r="1.3" fill="#2b5fd0"/>
<circle cx="683.2" cy="264.5" r="1.3" fill="#2b5fd0"/>
<circle cx="683.2" cy="271" r="1.3" fill="#2b5fd0"/>
<circle cx="683.2" cy="277.5" r="1.3" fill="#2b5fd0"/>
<ellipse cx="683.6" cy="287" rx="2" ry="1.2" fill="#e8eef4" stroke="#9aa" stroke-width=".5"/>
<path d="M784.2 251.5 L784.6 287" stroke="#c77a3a" stroke-width="1.3"/>
<circle cx="784.2" cy="252" r="1.3" fill="#2b5fd0"/>
<circle cx="784.2" cy="258" r="1.3" fill="#2b5fd0"/>
<circle cx="784.2" cy="264.5" r="1.3" fill="#2b5fd0"/>
<circle cx="784.2" cy="271" r="1.3" fill="#2b5fd0"/>
<circle cx="784.2" cy="277.5" r="1.3" fill="#2b5fd0"/>
<ellipse cx="784.6" cy="287" rx="2" ry="1.2" fill="#e8eef4" stroke="#9aa" stroke-width=".5"/>
<path d="M848.6 268 Q848.6 264.2 853.6 264.2 L884 263.8 L888.6 317.4 L862.6 318 Q855.6 317.3 854 309 Z" fill="#66728c" stroke="#dfe6ee" stroke-width="1.2"/>
<path d="M850 266 L884 265 L886 290 L856 292 Z" fill="#5b6782"/>
<text transform="translate(870.2 309.4) rotate(-83)" font-family="Liberation Sans, sans-serif" font-weight="bold" font-size="7.6" fill="#9aa4ba" textLength="17" lengthAdjust="spacingAndGlyphs">DOCK</text>
<text transform="translate(861.6 310.6) rotate(-83)" font-family="Liberation Sans, sans-serif" font-weight="bold" font-size="4.8" fill="#939db4" textLength="19.6" lengthAdjust="spacingAndGlyphs">LUGGAGE</text>
<path d="M874 293.4 l1.6 13.6" stroke="#8792ab" stroke-width="1.5"/>
<path d="M877 293.4 l1.6 13.6" stroke="#8792ab" stroke-width="1.5"/>
<path d="M880 293.4 l1.6 13.6" stroke="#8792ab" stroke-width="1.5"/>
<path d="M883 293.4 l1.6 13.6" stroke="#8792ab" stroke-width="1.5"/>
<ellipse cx="876" cy="284" rx="18" ry="3" fill="#566079"/>
<polygon points="884,263 892.5,263.5 895,272 894.5,281.5 884,283.5" fill="#e8842a" />
<polygon points="887.5,273.5 893.8,273 893.8,277.5 888,278" fill="#6d7078" />
<polygon points="858,260.8 884.3,260.8 884.3,281.6 858,281.6" fill="#ecdccd" />
<polygon points="858,277 884.3,277 884.3,281.6 858,281.6" fill="#e2cfbe" />
<polygon points="859,281.5 884,282 894.5,281.5 894,284 860,284.5" fill="#e0761f" />
<circle cx="864.5" cy="285" r="2.2" fill="#ddd" stroke="#444" stroke-width="1"/><circle cx="886.5" cy="285" r="2.2" fill="#ddd" stroke="#444" stroke-width="1"/>
<path d="M834 280 Q833 262 841 262 Q848.5 262 847 280" fill="none" stroke="#f0d63a" stroke-width="1.5"/>
<path d="M836 276 Q836 264.5 841.5 264.5 Q846 264.5 845.5 276" fill="none" stroke="#e8cf3a" stroke-width="1"/>
<polygon points="834.5,272 846.5,272 847,282.5 834,282.5" fill="#d63a36" />
<polygon points="836.5,265.5 845,265.5 845.5,274 836,274" fill="#5aa6d6" />
<polygon points="836.5,275 845.5,275 845.5,278 836.5,278" fill="#b92e2e" />
<polygon points="819.5,277.5 826.5,276.5 827.5,286 820.5,287.5" fill="#6a42b6" />
<polygon points="826,281 834,280.5 834,286.5 826.5,287" fill="#a86a50" />
<polygon points="825.5,277 832,276.5 832,281 826,281.2" fill="#e8c83a" />
<polygon points="844.5,286 850.5,286 850.5,296 844.5,296" fill="#6a42b6" />
<polygon points="844,295 850.5,295 850.5,300.5 844,300.5" fill="#a86a50" />
<rect x="693" y="243.5" width="80" height="40" fill="#8a5a40"/>
<path d="M694 248 q0 -5.8 3.7 -5.8 q3.7 0 3.7 5.8 z" fill="#f5dc1e" stroke="#a89a10" stroke-width="1"/>
<path d="M701.8 248 q0 -5.8 3.7 -5.8 q3.7 0 3.7 5.8 z" fill="#f5dc1e" stroke="#a89a10" stroke-width="1"/>
<path d="M709.7 248 q0 -5.8 3.7 -5.8 q3.7 0 3.7 5.8 z" fill="#f5dc1e" stroke="#a89a10" stroke-width="1"/>
<path d="M717.5 248 q0 -5.8 3.7 -5.8 q3.7 0 3.7 5.8 z" fill="#ee3340" stroke="#a81820" stroke-width="1"/>
<path d="M725.3 248 q0 -5.8 3.7 -5.8 q3.7 0 3.7 5.8 z" fill="#ee3340" stroke="#a81820" stroke-width="1"/>
<path d="M733.2 248 q0 -5.8 3.7 -5.8 q3.7 0 3.7 5.8 z" fill="#ee3340" stroke="#a81820" stroke-width="1"/>
<path d="M741 248 q0 -5.8 3.7 -5.8 q3.7 0 3.7 5.8 z" fill="#2a9be6" stroke="#1848a0" stroke-width="1"/>
<path d="M748.8 248 q0 -5.8 3.7 -5.8 q3.7 0 3.7 5.8 z" fill="#2a9be6" stroke="#1848a0" stroke-width="1"/>
<path d="M756.7 248 q0 -5.8 3.7 -5.8 q3.7 0 3.7 5.8 z" fill="#2a9be6" stroke="#1848a0" stroke-width="1"/>
<path d="M764.5 248 q0 -5.8 3.7 -5.8 q3.7 0 3.7 5.8 z" fill="#2a9be6" stroke="#1848a0" stroke-width="1"/>
<path d="M694 253.4 q0 -5.8 3.7 -5.8 q3.7 0 3.7 5.8 z" fill="#ee3340" stroke="#a81820" stroke-width="1"/>
<path d="M701.8 253.4 q0 -5.8 3.7 -5.8 q3.7 0 3.7 5.8 z" fill="#ee3340" stroke="#a81820" stroke-width="1"/>
<path d="M709.7 253.4 q0 -5.8 3.7 -5.8 q3.7 0 3.7 5.8 z" fill="#2a9be6" stroke="#1848a0" stroke-width="1"/>
<path d="M717.5 253.4 q0 -5.8 3.7 -5.8 q3.7 0 3.7 5.8 z" fill="#2a9be6" stroke="#1848a0" stroke-width="1"/>
<path d="M725.3 253.4 q0 -5.8 3.7 -5.8 q3.7 0 3.7 5.8 z" fill="#f5dc1e" stroke="#a89a10" stroke-width="1"/>
<path d="M733.2 253.4 q0 -5.8 3.7 -5.8 q3.7 0 3.7 5.8 z" fill="#f5dc1e" stroke="#a89a10" stroke-width="1"/>
<path d="M741 253.4 q0 -5.8 3.7 -5.8 q3.7 0 3.7 5.8 z" fill="#ee3340" stroke="#a81820" stroke-width="1"/>
<path d="M748.8 253.4 q0 -5.8 3.7 -5.8 q3.7 0 3.7 5.8 z" fill="#ee3340" stroke="#a81820" stroke-width="1"/>
<path d="M756.7 253.4 q0 -5.8 3.7 -5.8 q3.7 0 3.7 5.8 z" fill="#ee3340" stroke="#a81820" stroke-width="1"/>
<path d="M764.5 253.4 q0 -5.8 3.7 -5.8 q3.7 0 3.7 5.8 z" fill="#f5dc1e" stroke="#a89a10" stroke-width="1"/>
<path d="M694 258.9 q0 -5.8 3.7 -5.8 q3.7 0 3.7 5.8 z" fill="#f5dc1e" stroke="#a89a10" stroke-width="1"/>
<path d="M701.8 258.9 q0 -5.8 3.7 -5.8 q3.7 0 3.7 5.8 z" fill="#f5dc1e" stroke="#a89a10" stroke-width="1"/>
<path d="M709.7 258.9 q0 -5.8 3.7 -5.8 q3.7 0 3.7 5.8 z" fill="#f5dc1e" stroke="#a89a10" stroke-width="1"/>
<path d="M717.5 258.9 q0 -5.8 3.7 -5.8 q3.7 0 3.7 5.8 z" fill="#ee3340" stroke="#a81820" stroke-width="1"/>
<path d="M725.3 258.9 q0 -5.8 3.7 -5.8 q3.7 0 3.7 5.8 z" fill="#ee3340" stroke="#a81820" stroke-width="1"/>
<path d="M733.2 258.9 q0 -5.8 3.7 -5.8 q3.7 0 3.7 5.8 z" fill="#ee3340" stroke="#a81820" stroke-width="1"/>
<path d="M741 258.9 q0 -5.8 3.7 -5.8 q3.7 0 3.7 5.8 z" fill="#ee3340" stroke="#a81820" stroke-width="1"/>
<path d="M748.8 258.9 q0 -5.8 3.7 -5.8 q3.7 0 3.7 5.8 z" fill="#ee3340" stroke="#a81820" stroke-width="1"/>
<path d="M756.7 258.9 q0 -5.8 3.7 -5.8 q3.7 0 3.7 5.8 z" fill="#2a9be6" stroke="#1848a0" stroke-width="1"/>
<path d="M764.5 258.9 q0 -5.8 3.7 -5.8 q3.7 0 3.7 5.8 z" fill="#2a9be6" stroke="#1848a0" stroke-width="1"/>
<path d="M694 264.4 q0 -5.8 3.7 -5.8 q3.7 0 3.7 5.8 z" fill="#2a9be6" stroke="#1848a0" stroke-width="1"/>
<path d="M701.8 264.4 q0 -5.8 3.7 -5.8 q3.7 0 3.7 5.8 z" fill="#2a9be6" stroke="#1848a0" stroke-width="1"/>
<path d="M709.7 264.4 q0 -5.8 3.7 -5.8 q3.7 0 3.7 5.8 z" fill="#ee3340" stroke="#a81820" stroke-width="1"/>
<path d="M717.5 264.4 q0 -5.8 3.7 -5.8 q3.7 0 3.7 5.8 z" fill="#ee3340" stroke="#a81820" stroke-width="1"/>
<path d="M725.3 264.4 q0 -5.8 3.7 -5.8 q3.7 0 3.7 5.8 z" fill="#2a9be6" stroke="#1848a0" stroke-width="1"/>
<path d="M733.2 264.4 q0 -5.8 3.7 -5.8 q3.7 0 3.7 5.8 z" fill="#2a9be6" stroke="#1848a0" stroke-width="1"/>
<path d="M741 264.4 q0 -5.8 3.7 -5.8 q3.7 0 3.7 5.8 z" fill="#2a9be6" stroke="#1848a0" stroke-width="1"/>
<path d="M748.8 264.4 q0 -5.8 3.7 -5.8 q3.7 0 3.7 5.8 z" fill="#f5dc1e" stroke="#a89a10" stroke-width="1"/>
<path d="M756.7 264.4 q0 -5.8 3.7 -5.8 q3.7 0 3.7 5.8 z" fill="#f5dc1e" stroke="#a89a10" stroke-width="1"/>
<path d="M764.5 264.4 q0 -5.8 3.7 -5.8 q3.7 0 3.7 5.8 z" fill="#f5dc1e" stroke="#a89a10" stroke-width="1"/>
<path d="M694 269.8 q0 -5.8 3.7 -5.8 q3.7 0 3.7 5.8 z" fill="#ee3340" stroke="#a81820" stroke-width="1"/>
<path d="M701.8 269.8 q0 -5.8 3.7 -5.8 q3.7 0 3.7 5.8 z" fill="#ee3340" stroke="#a81820" stroke-width="1"/>
<path d="M709.7 269.8 q0 -5.8 3.7 -5.8 q3.7 0 3.7 5.8 z" fill="#ee3340" stroke="#a81820" stroke-width="1"/>
<path d="M717.5 269.8 q0 -5.8 3.7 -5.8 q3.7 0 3.7 5.8 z" fill="#2a9be6" stroke="#1848a0" stroke-width="1"/>
<path d="M725.3 269.8 q0 -5.8 3.7 -5.8 q3.7 0 3.7 5.8 z" fill="#2a9be6" stroke="#1848a0" stroke-width="1"/>
<path d="M733.2 269.8 q0 -5.8 3.7 -5.8 q3.7 0 3.7 5.8 z" fill="#2a9be6" stroke="#1848a0" stroke-width="1"/>
<path d="M741 269.8 q0 -5.8 3.7 -5.8 q3.7 0 3.7 5.8 z" fill="#ee3340" stroke="#a81820" stroke-width="1"/>
<path d="M748.8 269.8 q0 -5.8 3.7 -5.8 q3.7 0 3.7 5.8 z" fill="#ee3340" stroke="#a81820" stroke-width="1"/>
<path d="M756.7 269.8 q0 -5.8 3.7 -5.8 q3.7 0 3.7 5.8 z" fill="#ee3340" stroke="#a81820" stroke-width="1"/>
<path d="M764.5 269.8 q0 -5.8 3.7 -5.8 q3.7 0 3.7 5.8 z" fill="#ee3340" stroke="#a81820" stroke-width="1"/>
<path d="M694 275.2 q0 -5.8 3.7 -5.8 q3.7 0 3.7 5.8 z" fill="#ee3340" stroke="#a81820" stroke-width="1"/>
<path d="M701.8 275.2 q0 -5.8 3.7 -5.8 q3.7 0 3.7 5.8 z" fill="#ee3340" stroke="#a81820" stroke-width="1"/>
<path d="M709.7 275.2 q0 -5.8 3.7 -5.8 q3.7 0 3.7 5.8 z" fill="#2a9be6" stroke="#1848a0" stroke-width="1"/>
<path d="M717.5 275.2 q0 -5.8 3.7 -5.8 q3.7 0 3.7 5.8 z" fill="#2a9be6" stroke="#1848a0" stroke-width="1"/>
<path d="M725.3 275.2 q0 -5.8 3.7 -5.8 q3.7 0 3.7 5.8 z" fill="#2a9be6" stroke="#1848a0" stroke-width="1"/>
<path d="M733.2 275.2 q0 -5.8 3.7 -5.8 q3.7 0 3.7 5.8 z" fill="#f5dc1e" stroke="#a89a10" stroke-width="1"/>
<path d="M741 275.2 q0 -5.8 3.7 -5.8 q3.7 0 3.7 5.8 z" fill="#f5dc1e" stroke="#a89a10" stroke-width="1"/>
<path d="M748.8 275.2 q0 -5.8 3.7 -5.8 q3.7 0 3.7 5.8 z" fill="#f5dc1e" stroke="#a89a10" stroke-width="1"/>
<path d="M756.7 275.2 q0 -5.8 3.7 -5.8 q3.7 0 3.7 5.8 z" fill="#f5dc1e" stroke="#a89a10" stroke-width="1"/>
<path d="M764.5 275.2 q0 -5.8 3.7 -5.8 q3.7 0 3.7 5.8 z" fill="#f5dc1e" stroke="#a89a10" stroke-width="1"/>
<path d="M694 280.7 q0 -5.8 3.7 -5.8 q3.7 0 3.7 5.8 z" fill="#f5dc1e" stroke="#a89a10" stroke-width="1"/>
<path d="M701.8 280.7 q0 -5.8 3.7 -5.8 q3.7 0 3.7 5.8 z" fill="#f5dc1e" stroke="#a89a10" stroke-width="1"/>
<path d="M709.7 280.7 q0 -5.8 3.7 -5.8 q3.7 0 3.7 5.8 z" fill="#f5dc1e" stroke="#a89a10" stroke-width="1"/>
<path d="M717.5 280.7 q0 -5.8 3.7 -5.8 q3.7 0 3.7 5.8 z" fill="#ee3340" stroke="#a81820" stroke-width="1"/>
<path d="M725.3 280.7 q0 -5.8 3.7 -5.8 q3.7 0 3.7 5.8 z" fill="#f5dc1e" stroke="#a89a10" stroke-width="1"/>
<path d="M733.2 280.7 q0 -5.8 3.7 -5.8 q3.7 0 3.7 5.8 z" fill="#f5dc1e" stroke="#a89a10" stroke-width="1"/>
<path d="M741 280.7 q0 -5.8 3.7 -5.8 q3.7 0 3.7 5.8 z" fill="#f5dc1e" stroke="#a89a10" stroke-width="1"/>
<path d="M748.8 280.7 q0 -5.8 3.7 -5.8 q3.7 0 3.7 5.8 z" fill="#f5dc1e" stroke="#a89a10" stroke-width="1"/>
<path d="M756.7 280.7 q0 -5.8 3.7 -5.8 q3.7 0 3.7 5.8 z" fill="#f5dc1e" stroke="#a89a10" stroke-width="1"/>
<path d="M764.5 280.7 q0 -5.8 3.7 -5.8 q3.7 0 3.7 5.8 z" fill="#2a9be6" stroke="#1848a0" stroke-width="1"/>
<rect x="692" y="280" width="82.5" height="13.8" fill="#050505"/>
<ellipse cx="697.7" cy="286" rx="3.4" ry="4.3" fill="#2a9be6"/>
<path d="M697.7 290 l0 3" stroke="#2a9be6" stroke-width="1.2"/>
<ellipse cx="705.5" cy="286" rx="3.4" ry="4.3" fill="#2a9be6"/>
<path d="M705.5 290 l0 3" stroke="#2a9be6" stroke-width="1.2"/>
<ellipse cx="713.4" cy="286" rx="3.4" ry="4.3" fill="#2a9be6"/>
<path d="M713.4 290 l0 3" stroke="#2a9be6" stroke-width="1.2"/>
<ellipse cx="721.2" cy="286" rx="3.4" ry="4.3" fill="#2a9be6"/>
<path d="M721.2 290 l0 3" stroke="#2a9be6" stroke-width="1.2"/>
<ellipse cx="729" cy="286" rx="3.4" ry="4.3" fill="#2a9be6"/>
<path d="M729 290 l0 3" stroke="#2a9be6" stroke-width="1.2"/>
<ellipse cx="736.9" cy="286" rx="3.4" ry="4.3" fill="#f5dc1e"/>
<path d="M736.9 290 l0 3" stroke="#f5dc1e" stroke-width="1.2"/>
<ellipse cx="744.7" cy="286" rx="3.4" ry="4.3" fill="#f5dc1e"/>
<path d="M744.7 290 l0 3" stroke="#f5dc1e" stroke-width="1.2"/>
<ellipse cx="752.5" cy="286" rx="3.4" ry="4.3" fill="#f5dc1e"/>
<path d="M752.5 290 l0 3" stroke="#f5dc1e" stroke-width="1.2"/>
<ellipse cx="760.4" cy="286" rx="3.4" ry="4.3" fill="#f5dc1e"/>
<path d="M760.4 290 l0 3" stroke="#f5dc1e" stroke-width="1.2"/>
<ellipse cx="768.2" cy="286" rx="3.4" ry="4.3" fill="#f5dc1e"/>
<path d="M768.2 290 l0 3" stroke="#f5dc1e" stroke-width="1.2"/>
<path d="M693 291.6 L734 291.6" stroke="#2a9be6" stroke-width="1" stroke-dasharray="2 2"/>
<path d="M734 291.6 L774 291.6" stroke="#f5dc1e" stroke-width="1" stroke-dasharray="2 2"/>
<polygon points="634,381 828,379 828.4,381.4 634,383.4" fill="#c4cce4" />
<polygon points="644,383.2 822,381.4 823,393 643,394.4" fill="#c2c1ad" />
<path d="M633 372 Q633.5 360.5 643 360.2 L814 359 Q823.5 359.3 826 370 L828 378.5 L634 380.5 Z" fill="#adadad"/>
<path d="M637 361.5 L637.3 375.5 M640 361.5 L640.3 375.5 M643.1 361.5 L643.4 375.5 M646.1 361.5 L646.4 375.5 M649.2 361.5 L649.5 375.5 M652.2 361.5 L652.5 375.5 M655.3 361.5 L655.6 375.5 M658.3 361.5 L658.6 375.5 M661.4 361.5 L661.7 375.5 M664.4 361.5 L664.7 375.5 M667.5 361.5 L667.8 375.5 M670.5 361.5 L670.8 375.5 M673.6 361.5 L673.9 375.5 M676.6 361.5 L676.9 375.5 M679.7 361.5 L680 375.5 M682.7 361.5 L683 375.5 M685.8 361.5 L686.1 375.5 M688.8 361.5 L689.1 375.5 M691.9 361.5 L692.2 375.5 M694.9 361.5 L695.2 375.5 M698 361.5 L698.3 375.5 M701 361.5 L701.3 375.5 M704.1 361.5 L704.4 375.5 M707.1 361.5 L707.4 375.5 M710.2 361.5 L710.5 375.5 M713.2 361.5 L713.5 375.5 M716.3 361.5 L716.6 375.5 M719.3 361.5 L719.6 375.5 M722.4 361.5 L722.7 375.5 M725.4 361.5 L725.7 375.5 M728.5 361.5 L728.8 375.5 M731.5 361.5 L731.8 375.5 M734.6 361.5 L734.9 375.5 M737.6 361.5 L737.9 375.5 M740.7 361.5 L741 375.5 M743.7 361.5 L744 375.5 M746.8 361.5 L747.1 375.5 M749.8 361.5 L750.1 375.5 M752.9 361.5 L753.2 375.5 M755.9 361.5 L756.2 375.5 M759 361.5 L759.3 375.5 M762 361.5 L762.3 375.5 M765.1 361.5 L765.4 375.5 M768.1 361.5 L768.4 375.5 M771.2 361.5 L771.5 375.5 M774.2 361.5 L774.5 375.5 M777.3 361.5 L777.6 375.5 M780.3 361.5 L780.6 375.5 M783.4 361.5 L783.7 375.5 M786.4 361.5 L786.7 375.5 M789.5 361.5 L789.8 375.5 M792.5 361.5 L792.8 375.5 M795.6 361.5 L795.9 375.5 M798.6 361.5 L798.9 375.5 M801.7 361.5 L802 375.5 M804.7 361.5 L805 375.5 M807.8 361.5 L808.1 375.5 M810.8 361.5 L811.1 375.5 M813.9 361.5 L814.2 375.5 M816.9 361.5 L817.2 375.5 M820 361.5 L820.3 375.5 M823 361.5 L823.3 375.5" stroke="#d2d2d2" stroke-width="1.4" fill="none"/>
<polygon points="631.5,372 638.5,380 615,650 611,662 603.5,640 602.6,633" fill="#bebdb6" />
<path d="M633.5 378 L628.6 420 L606.5 615 L606.6 640" fill="none" stroke="#acaca8" stroke-width="5" stroke-dasharray="1.6 2.6"/>
<polygon points="826.5,372 829.5,380 856,625 853.5,645 849,640" fill="#c2c1ba" />
<path d="M612 652 Q617 663.5 630 663.8 L738.5 661.3 L825 655 L826 660 L738.5 666 L628 669 Z" fill="#b5b5b2"/>
<path d="M637.8 398 L639 388 Q640 378.6 649 378.4 L812 377.3 Q820.5 377.4 822.5 386 L826 400 L829 434 L833.5 480 L847.3 624 Q850.5 650 830 656.8 L825 658.8 L738.5 664.8 L630 667.6 Q614 667 611.2 650 L612.6 620 L628.4 480 Z" fill="none" stroke="#f3f3f3" stroke-width="5" stroke-linejoin="round"/>
<path d="M637.8 398 L639 388 Q640 378.6 649 378.4 L812 377.3 Q820.5 377.4 822.5 386 L826 400 L829 434 L833.5 480 L847.3 624 Q850.5 650 830 656.8 L825 658.8 L738.5 664.8 L630 667.6 Q614 667 611.2 650 L612.6 620 L628.4 480 Z" fill="none" stroke="#a2a2a2" stroke-width="2.7" stroke-dasharray="2.8 2.4" stroke-linejoin="round"/>
<path d="M647 376.2 L816 375.2" stroke="#efefef" stroke-width="1.8"/>
<path d="M717.5 409.8 q0.5 -2.6 3 -2.6 q0.6 -3 3 -2.6 q2 0.2 2.4 2.8 q2.6 0.4 2.4 2.2 q-5 1.6 -10.8 0.2 z" fill="#f4f4f4"/>
<rect transform="translate(777.2 406.7) rotate(15)" x="-11.4" y="-4.9" width="22.9" height="9.7" rx="2.9" fill="#1474c8" stroke="#1848b0" stroke-width="1.3" stroke-dasharray="1.3 1.1"/><rect transform="translate(777.2 405.6) rotate(15)" x="-11.4" y="-4.9" width="22.9" height="9.7" rx="2.9" fill="#1474c8"/><rect transform="translate(777.2 404.5) rotate(15)" x="-11.4" y="-4.9" width="22.9" height="9.7" rx="2.9" fill="#1474c8"/><rect transform="translate(777.2 403.4) rotate(15)" x="-11.4" y="-4.9" width="22.9" height="9.7" rx="2.9" fill="#1474c8"/><rect transform="translate(777.2 402.3) rotate(15)" x="-11.4" y="-4.9" width="22.9" height="9.7" rx="2.9" fill="#1474c8" stroke="#1848b0" stroke-width="1.3" stroke-dasharray="1.3 1.1"/><path transform="translate(777.2 404.8) rotate(15)" d="M-8.4 4.9 L8.4 4.9" stroke="#17205a" stroke-width="1.6" stroke-dasharray="5 2" fill="none"/><g transform="translate(777.2 402.3) rotate(15)"><rect x="-11.4" y="-4.9" width="22.9" height="9.7" rx="2.9" fill="#1fa6ee"/><rect x="-7.5" y="-3.9" width="14.2" height="7.8" rx="2.4" fill="#23245c"/><rect x="-5.3" y="-3.3" width="9.6" height="6.6" rx="1.6" fill="#5cc8fa"/><rect x="-4.6" y="-2.7" width="8.2" height="5.5" rx="1.4" fill="#1fa6ee"/><path d="M-6.4 -1 L3.5 -1 L3.5 -2.5 L7 0 L3.5 2.5 L3.5 1 L-6.4 1 Z" fill="#fff"/></g>
<rect transform="translate(670.2 407.4) rotate(175)" x="-11.8" y="-5.8" width="23.6" height="11.6" rx="3.5" fill="#1474c8" stroke="#1848b0" stroke-width="1.3" stroke-dasharray="1.3 1.1"/><rect transform="translate(670.2 406.3) rotate(175)" x="-11.8" y="-5.8" width="23.6" height="11.6" rx="3.5" fill="#1474c8"/><rect transform="translate(670.2 405.2) rotate(175)" x="-11.8" y="-5.8" width="23.6" height="11.6" rx="3.5" fill="#1474c8"/><rect transform="translate(670.2 404.1) rotate(175)" x="-11.8" y="-5.8" width="23.6" height="11.6" rx="3.5" fill="#1474c8"/><rect transform="translate(670.2 403) rotate(175)" x="-11.8" y="-5.8" width="23.6" height="11.6" rx="3.5" fill="#1474c8" stroke="#1848b0" stroke-width="1.3" stroke-dasharray="1.3 1.1"/><path transform="translate(670.2 405.5) rotate(175)" d="M-8.8 -5.8 L8.8 -5.8" stroke="#17205a" stroke-width="1.7" stroke-dasharray="5 2" fill="none"/><g transform="translate(670.2 403) rotate(175)"><rect x="-11.8" y="-5.8" width="23.6" height="11.6" rx="3.5" fill="#1fa6ee"/><rect x="-7.8" y="-4.6" width="14.6" height="9.3" rx="2.4" fill="#23245c"/><rect x="-5.4" y="-3.9" width="9.9" height="7.9" rx="1.6" fill="#5cc8fa"/><rect x="-4.7" y="-3.3" width="8.5" height="6.5" rx="1.4" fill="#1fa6ee"/><path d="M-6.6 -1.2 L3.1 -1.2 L3.1 -3 L7.2 0 L3.1 3 L3.1 1.2 L-6.6 1.2 Z" fill="#fff"/></g>
<rect transform="translate(771.3 419.2) rotate(15)" x="-14.9" y="-5.3" width="29.7" height="10.7" rx="3.2" fill="#1474c8" stroke="#1848b0" stroke-width="1.3" stroke-dasharray="1.3 1.1"/><rect transform="translate(771.3 417.9) rotate(15)" x="-14.9" y="-5.3" width="29.7" height="10.7" rx="3.2" fill="#1474c8"/><rect transform="translate(771.3 416.7) rotate(15)" x="-14.9" y="-5.3" width="29.7" height="10.7" rx="3.2" fill="#1474c8"/><rect transform="translate(771.3 415.4) rotate(15)" x="-14.9" y="-5.3" width="29.7" height="10.7" rx="3.2" fill="#1474c8"/><rect transform="translate(771.3 414.2) rotate(15)" x="-14.9" y="-5.3" width="29.7" height="10.7" rx="3.2" fill="#1474c8" stroke="#1848b0" stroke-width="1.3" stroke-dasharray="1.3 1.1"/><path transform="translate(771.3 417) rotate(15)" d="M-11.9 5.3 L11.9 5.3" stroke="#17205a" stroke-width="1.6" stroke-dasharray="4.2 1.4" fill="none"/><g transform="translate(771.3 414.2) rotate(15)"><rect x="-14.9" y="-5.3" width="29.7" height="10.7" rx="3.2" fill="#1fa6ee"/><rect x="-13.7" y="-4.1" width="27.3" height="8.3" rx="2.6" fill="#5cc8fa" opacity=".55"/><rect x="-12.3" y="-3.1" width="24.5" height="6.3" rx="1.9" fill="#1fa6ee"/><path d="M-7.4 -1.1 L4.2 -1.1 L4.2 -2.8 L8 0 L4.2 2.8 L4.2 1.1 L-7.4 1.1 Z" fill="#fff"/></g>
<rect transform="translate(672.4 420.3) rotate(171)" x="-15.1" y="-5.3" width="30.2" height="10.6" rx="3.2" fill="#1474c8" stroke="#1848b0" stroke-width="1.3" stroke-dasharray="1.3 1.1"/><rect transform="translate(672.4 419.1) rotate(171)" x="-15.1" y="-5.3" width="30.2" height="10.6" rx="3.2" fill="#1474c8"/><rect transform="translate(672.4 417.8) rotate(171)" x="-15.1" y="-5.3" width="30.2" height="10.6" rx="3.2" fill="#1474c8"/><rect transform="translate(672.4 416.6) rotate(171)" x="-15.1" y="-5.3" width="30.2" height="10.6" rx="3.2" fill="#1474c8"/><rect transform="translate(672.4 415.3) rotate(171)" x="-15.1" y="-5.3" width="30.2" height="10.6" rx="3.2" fill="#1474c8" stroke="#1848b0" stroke-width="1.3" stroke-dasharray="1.3 1.1"/><path transform="translate(672.4 418.1) rotate(171)" d="M-12.1 -5.3 L12.1 -5.3" stroke="#17205a" stroke-width="1.7" stroke-dasharray="4.2 1.4" fill="none"/><g transform="translate(672.4 415.3) rotate(171)"><rect x="-15.1" y="-5.3" width="30.2" height="10.6" rx="3.2" fill="#1fa6ee"/><rect x="-13.9" y="-4.1" width="27.8" height="8.2" rx="2.5" fill="#5cc8fa" opacity=".55"/><rect x="-12.5" y="-3.1" width="25" height="6.2" rx="1.9" fill="#1fa6ee"/><path d="M-7.6 -1.1 L4.4 -1.1 L4.4 -2.7 L8.2 0 L4.4 2.7 L4.4 1.1 L-7.6 1.1 Z" fill="#fff"/></g>
<rect transform="translate(678.7 434.7) rotate(161)" x="-19.7" y="-5.1" width="39.4" height="10.3" rx="3.1" fill="#1f9e2e" stroke="#167a22" stroke-width="1.3" stroke-dasharray="1.3 1.1"/><rect transform="translate(678.7 433.4) rotate(161)" x="-19.7" y="-5.1" width="39.4" height="10.3" rx="3.1" fill="#1f9e2e"/><rect transform="translate(678.7 432.2) rotate(161)" x="-19.7" y="-5.1" width="39.4" height="10.3" rx="3.1" fill="#1f9e2e"/><rect transform="translate(678.7 430.9) rotate(161)" x="-19.7" y="-5.1" width="39.4" height="10.3" rx="3.1" fill="#1f9e2e"/><rect transform="translate(678.7 429.7) rotate(161)" x="-19.7" y="-5.1" width="39.4" height="10.3" rx="3.1" fill="#1f9e2e" stroke="#167a22" stroke-width="1.3" stroke-dasharray="1.3 1.1"/><path transform="translate(678.7 432.5) rotate(161)" d="M-16.7 -5.1 L16.7 -5.1" stroke="#17205a" stroke-width="1.6" stroke-dasharray="4.2 1.4" fill="none"/><g transform="translate(678.7 429.7) rotate(161)"><rect x="-19.7" y="-5.1" width="39.4" height="10.3" rx="3.1" fill="#30cc3e"/><rect x="-18.5" y="-3.9" width="37" height="7.9" rx="2.5" fill="#66e470" opacity=".55"/><rect x="-17.1" y="-2.9" width="34.2" height="5.9" rx="1.8" fill="#30cc3e"/><path d="M-9 -1 L5.9 -1 L5.9 -2.7 L9.6 0 L5.9 2.7 L5.9 1 L-9 1 Z" fill="#fff"/></g>
<rect transform="translate(768.7 435) rotate(15)" x="-19.9" y="-5.3" width="39.7" height="10.7" rx="3.2" fill="#1f9e2e" stroke="#167a22" stroke-width="1.3" stroke-dasharray="1.3 1.1"/><rect transform="translate(768.7 433.8) rotate(15)" x="-19.9" y="-5.3" width="39.7" height="10.7" rx="3.2" fill="#1f9e2e"/><rect transform="translate(768.7 432.5) rotate(15)" x="-19.9" y="-5.3" width="39.7" height="10.7" rx="3.2" fill="#1f9e2e"/><rect transform="translate(768.7 431.2) rotate(15)" x="-19.9" y="-5.3" width="39.7" height="10.7" rx="3.2" fill="#1f9e2e"/><rect transform="translate(768.7 430) rotate(15)" x="-19.9" y="-5.3" width="39.7" height="10.7" rx="3.2" fill="#1f9e2e" stroke="#167a22" stroke-width="1.3" stroke-dasharray="1.3 1.1"/><path transform="translate(768.7 432.8) rotate(15)" d="M-16.9 5.3 L16.9 5.3" stroke="#17205a" stroke-width="1.6" stroke-dasharray="4.2 1.4" fill="none"/><g transform="translate(768.7 430) rotate(15)"><rect x="-19.9" y="-5.3" width="39.7" height="10.7" rx="3.2" fill="#30cc3e"/><rect x="-18.7" y="-4.1" width="37.3" height="8.3" rx="2.6" fill="#66e470" opacity=".55"/><rect x="-17.3" y="-3.1" width="34.5" height="6.3" rx="1.9" fill="#30cc3e"/><path d="M-9 -1.1 L5.8 -1.1 L5.8 -2.8 L9.6 0 L5.8 2.8 L5.8 1.1 L-9 1.1 Z" fill="#fff"/></g>
<rect transform="translate(764.3 449.5) rotate(18)" x="-15.2" y="-5.4" width="30.5" height="10.7" rx="3.2" fill="#c9b012" stroke="#9a8a0c" stroke-width="1.3" stroke-dasharray="1.3 1.1"/><rect transform="translate(764.3 448.2) rotate(18)" x="-15.2" y="-5.4" width="30.5" height="10.7" rx="3.2" fill="#c9b012"/><rect transform="translate(764.3 447) rotate(18)" x="-15.2" y="-5.4" width="30.5" height="10.7" rx="3.2" fill="#c9b012"/><rect transform="translate(764.3 445.8) rotate(18)" x="-15.2" y="-5.4" width="30.5" height="10.7" rx="3.2" fill="#c9b012"/><rect transform="translate(764.3 444.5) rotate(18)" x="-15.2" y="-5.4" width="30.5" height="10.7" rx="3.2" fill="#c9b012" stroke="#9a8a0c" stroke-width="1.3" stroke-dasharray="1.3 1.1"/><path transform="translate(764.3 447.3) rotate(18)" d="M-12.2 5.4 L12.2 5.4" stroke="#17205a" stroke-width="1.6" stroke-dasharray="4.2 1.4" fill="none"/><g transform="translate(764.3 444.5) rotate(18)"><rect x="-15.2" y="-5.4" width="30.5" height="10.7" rx="3.2" fill="#f4df28"/><rect x="-14" y="-4.2" width="28.1" height="8.3" rx="2.6" fill="#fbf070" opacity=".55"/><rect x="-12.6" y="-3.2" width="25.3" height="6.3" rx="1.9" fill="#f4df28"/><path d="M-7.6 -1.1 L4.4 -1.1 L4.4 -2.8 L8.2 0 L4.4 2.8 L4.4 1.1 L-7.6 1.1 Z" fill="#fff"/></g>
<rect transform="translate(682.4 451) rotate(-20)" x="-15.6" y="-5.4" width="31.3" height="10.8" rx="3.2" fill="#1474c8" stroke="#1848b0" stroke-width="1.3" stroke-dasharray="1.3 1.1"/><rect transform="translate(682.4 449.8) rotate(-20)" x="-15.6" y="-5.4" width="31.3" height="10.8" rx="3.2" fill="#1474c8"/><rect transform="translate(682.4 448.5) rotate(-20)" x="-15.6" y="-5.4" width="31.3" height="10.8" rx="3.2" fill="#1474c8"/><rect transform="translate(682.4 447.2) rotate(-20)" x="-15.6" y="-5.4" width="31.3" height="10.8" rx="3.2" fill="#1474c8"/><rect transform="translate(682.4 446) rotate(-20)" x="-15.6" y="-5.4" width="31.3" height="10.8" rx="3.2" fill="#1474c8" stroke="#1848b0" stroke-width="1.3" stroke-dasharray="1.3 1.1"/><path transform="translate(682.4 448.8) rotate(-20)" d="M-12.6 5.4 L12.6 5.4" stroke="#17205a" stroke-width="1.6" stroke-dasharray="4.2 1.4" fill="none"/><g transform="translate(682.4 446) rotate(-20)"><rect x="-15.6" y="-5.4" width="31.3" height="10.8" rx="3.2" fill="#1fa6ee"/><rect x="-14.4" y="-4.2" width="28.9" height="8.4" rx="2.6" fill="#5cc8fa" opacity=".55"/><rect x="-13" y="-3.2" width="26.1" height="6.4" rx="1.9" fill="#1fa6ee"/><path d="M-7.8 -1.1 L4.6 -1.1 L4.6 -2.8 L8.4 0 L4.6 2.8 L4.6 1.1 L-7.8 1.1 Z" fill="#fff"/></g>
<rect transform="translate(721.8 458.7) rotate(-2)" x="-16.4" y="-5.5" width="32.8" height="11" rx="3.3" fill="#c9b012" stroke="#9a8a0c" stroke-width="1.3" stroke-dasharray="1.3 1.1"/><rect transform="translate(721.8 457.4) rotate(-2)" x="-16.4" y="-5.5" width="32.8" height="11" rx="3.3" fill="#c9b012"/><rect transform="translate(721.8 456.2) rotate(-2)" x="-16.4" y="-5.5" width="32.8" height="11" rx="3.3" fill="#c9b012"/><rect transform="translate(721.8 454.9) rotate(-2)" x="-16.4" y="-5.5" width="32.8" height="11" rx="3.3" fill="#c9b012"/><rect transform="translate(721.8 453.7) rotate(-2)" x="-16.4" y="-5.5" width="32.8" height="11" rx="3.3" fill="#c9b012" stroke="#9a8a0c" stroke-width="1.3" stroke-dasharray="1.3 1.1"/><path transform="translate(721.8 456.5) rotate(-2)" d="M-13.4 5.5 L13.4 5.5" stroke="#17205a" stroke-width="1.7" stroke-dasharray="4.2 1.4" fill="none"/><g transform="translate(721.8 453.7) rotate(-2)"><rect x="-16.4" y="-5.5" width="32.8" height="11" rx="3.3" fill="#f4df28"/><rect x="-15.2" y="-4.3" width="30.4" height="8.6" rx="2.6" fill="#fbf070" opacity=".55"/><rect x="-13.8" y="-3.3" width="27.6" height="6.6" rx="2" fill="#f4df28"/><path d="M-8.2 -1.1 L4.9 -1.1 L4.9 -2.9 L8.8 0 L4.9 2.9 L4.9 1.1 L-8.2 1.1 Z" fill="#fff"/></g>
<rect transform="translate(759.5 465.2) rotate(30)" x="-11.9" y="-5.3" width="23.8" height="10.7" rx="3.2" fill="#b41e2c" stroke="#8e1420" stroke-width="1.3" stroke-dasharray="1.3 1.1"/><rect transform="translate(759.5 464.1) rotate(30)" x="-11.9" y="-5.3" width="23.8" height="10.7" rx="3.2" fill="#b41e2c"/><rect transform="translate(759.5 463) rotate(30)" x="-11.9" y="-5.3" width="23.8" height="10.7" rx="3.2" fill="#b41e2c"/><rect transform="translate(759.5 461.9) rotate(30)" x="-11.9" y="-5.3" width="23.8" height="10.7" rx="3.2" fill="#b41e2c"/><rect transform="translate(759.5 460.8) rotate(30)" x="-11.9" y="-5.3" width="23.8" height="10.7" rx="3.2" fill="#b41e2c" stroke="#8e1420" stroke-width="1.3" stroke-dasharray="1.3 1.1"/><path transform="translate(759.5 463.3) rotate(30)" d="M-8.9 5.3 L8.9 5.3" stroke="#17205a" stroke-width="1.5" stroke-dasharray="5 2" fill="none"/><g transform="translate(759.5 460.8) rotate(30)"><rect x="-11.9" y="-5.3" width="23.8" height="10.7" rx="3.2" fill="#e83040"/><rect x="-7.9" y="-4.3" width="14.8" height="8.6" rx="2.4" fill="#23245c"/><rect x="-5.5" y="-3.6" width="10" height="7.3" rx="1.6" fill="#f2707a"/><rect x="-4.8" y="-3" width="8.6" height="6" rx="1.4" fill="#e83040"/><path d="M-6.7 -1.1 L3.5 -1.1 L3.5 -2.8 L7.3 0 L3.5 2.8 L3.5 1.1 L-6.7 1.1 Z" fill="#fff"/></g>
<rect transform="translate(686.8 468.4) rotate(-40)" x="-11.1" y="-5.6" width="22.2" height="11.1" rx="3.3" fill="#b41e2c" stroke="#8e1420" stroke-width="1.3" stroke-dasharray="1.3 1.1"/><rect transform="translate(686.8 467.3) rotate(-40)" x="-11.1" y="-5.6" width="22.2" height="11.1" rx="3.3" fill="#b41e2c"/><rect transform="translate(686.8 466.2) rotate(-40)" x="-11.1" y="-5.6" width="22.2" height="11.1" rx="3.3" fill="#b41e2c"/><rect transform="translate(686.8 465.1) rotate(-40)" x="-11.1" y="-5.6" width="22.2" height="11.1" rx="3.3" fill="#b41e2c"/><rect transform="translate(686.8 464) rotate(-40)" x="-11.1" y="-5.6" width="22.2" height="11.1" rx="3.3" fill="#b41e2c" stroke="#8e1420" stroke-width="1.3" stroke-dasharray="1.3 1.1"/><path transform="translate(686.8 466.5) rotate(-40)" d="M-8.1 5.6 L8.1 5.6" stroke="#17205a" stroke-width="1.3" stroke-dasharray="5 2" fill="none"/><g transform="translate(686.8 464) rotate(-40)"><rect x="-11.1" y="-5.6" width="22.2" height="11.1" rx="3.3" fill="#e83040"/><rect x="-7.3" y="-4.5" width="13.7" height="8.9" rx="2.4" fill="#23245c"/><rect x="-5.1" y="-3.8" width="9.3" height="7.6" rx="1.6" fill="#f2707a"/><rect x="-4.4" y="-3.1" width="8" height="6.2" rx="1.4" fill="#e83040"/><path d="M-6.2 -1.1 L2.9 -1.1 L2.9 -2.9 L6.8 0 L2.9 2.9 L2.9 1.1 L-6.2 1.1 Z" fill="#fff"/></g>
<rect transform="translate(787.3 478.7) rotate(-32)" x="-17.2" y="-6.4" width="34.4" height="12.8" rx="3.8" fill="#1474c8" stroke="#1848b0" stroke-width="1.3" stroke-dasharray="1.3 1.1"/><rect transform="translate(787.3 477.4) rotate(-32)" x="-17.2" y="-6.4" width="34.4" height="12.8" rx="3.8" fill="#1474c8"/><rect transform="translate(787.3 476.2) rotate(-32)" x="-17.2" y="-6.4" width="34.4" height="12.8" rx="3.8" fill="#1474c8"/><rect transform="translate(787.3 474.9) rotate(-32)" x="-17.2" y="-6.4" width="34.4" height="12.8" rx="3.8" fill="#1474c8"/><rect transform="translate(787.3 473.7) rotate(-32)" x="-17.2" y="-6.4" width="34.4" height="12.8" rx="3.8" fill="#1474c8" stroke="#1848b0" stroke-width="1.3" stroke-dasharray="1.3 1.1"/><path transform="translate(787.3 476.5) rotate(-32)" d="M-14.2 6.4 L14.2 6.4" stroke="#17205a" stroke-width="1.4" stroke-dasharray="4.2 1.4" fill="none"/><g transform="translate(787.3 473.7) rotate(-32)"><rect x="-17.2" y="-6.4" width="34.4" height="12.8" rx="3.8" fill="#1fa6ee"/><rect x="-16" y="-5.2" width="32" height="10.4" rx="3.1" fill="#5cc8fa" opacity=".55"/><rect x="-14.6" y="-4.2" width="29.2" height="8.4" rx="2.3" fill="#1fa6ee"/><path d="M-8.6 -1.3 L4.8 -1.3 L4.8 -3.3 L9.2 0 L4.8 3.3 L4.8 1.3 L-8.6 1.3 Z" fill="#fff"/></g>
<rect transform="translate(665.6 489.6) rotate(185)" x="-14.3" y="-6.3" width="28.6" height="12.6" rx="3.8" fill="#1474c8" stroke="#1848b0" stroke-width="1.3" stroke-dasharray="1.3 1.1"/><rect transform="translate(665.6 488.5) rotate(185)" x="-14.3" y="-6.3" width="28.6" height="12.6" rx="3.8" fill="#1474c8"/><rect transform="translate(665.6 487.4) rotate(185)" x="-14.3" y="-6.3" width="28.6" height="12.6" rx="3.8" fill="#1474c8"/><rect transform="translate(665.6 486.3) rotate(185)" x="-14.3" y="-6.3" width="28.6" height="12.6" rx="3.8" fill="#1474c8"/><rect transform="translate(665.6 485.2) rotate(185)" x="-14.3" y="-6.3" width="28.6" height="12.6" rx="3.8" fill="#1474c8" stroke="#1848b0" stroke-width="1.3" stroke-dasharray="1.3 1.1"/><path transform="translate(665.6 487.7) rotate(185)" d="M-11.3 -6.3 L11.3 -6.3" stroke="#17205a" stroke-width="1.7" stroke-dasharray="5 2" fill="none"/><g transform="translate(665.6 485.2) rotate(185)"><rect x="-14.3" y="-6.3" width="28.6" height="12.6" rx="3.8" fill="#1fa6ee"/><rect x="-9.4" y="-5" width="17.7" height="10.1" rx="2.4" fill="#23245c"/><rect x="-6.6" y="-4.3" width="12" height="8.6" rx="1.6" fill="#5cc8fa"/><rect x="-5.7" y="-3.5" width="10.3" height="7.1" rx="1.4" fill="#1fa6ee"/><path d="M-8 -1.3 L4.2 -1.3 L4.2 -3.3 L8.6 0 L4.2 3.3 L4.2 1.3 L-8 1.3 Z" fill="#fff"/></g>
<rect transform="translate(737.7 491.4) rotate(-90)" x="-11.8" y="-8" width="23.6" height="16" rx="4.8" fill="#1f9e2e" stroke="#167a22" stroke-width="1.3" stroke-dasharray="1.3 1.1"/><rect transform="translate(737.7 490.3) rotate(-90)" x="-11.8" y="-8" width="23.6" height="16" rx="4.8" fill="#1f9e2e"/><rect transform="translate(737.7 489.2) rotate(-90)" x="-11.8" y="-8" width="23.6" height="16" rx="4.8" fill="#1f9e2e"/><rect transform="translate(737.7 488.1) rotate(-90)" x="-11.8" y="-8" width="23.6" height="16" rx="4.8" fill="#1f9e2e"/><rect transform="translate(737.7 487) rotate(-90)" x="-11.8" y="-8" width="23.6" height="16" rx="4.8" fill="#1f9e2e" stroke="#167a22" stroke-width="1.3" stroke-dasharray="1.3 1.1"/><g transform="translate(737.7 487) rotate(-90)"><rect x="-11.8" y="-8" width="23.6" height="16" rx="4.8" fill="#30cc3e"/><rect x="-7.8" y="-6.4" width="14.6" height="12.8" rx="2.4" fill="#23245c"/><rect x="-5.4" y="-5.4" width="9.9" height="10.9" rx="1.6" fill="#66e470"/><rect x="-4.7" y="-4.5" width="8.5" height="9" rx="1.4" fill="#30cc3e"/><path d="M-6.6 -1.6 L1.8 -1.6 L1.8 -4.2 L7.2 0 L1.8 4.2 L1.8 1.6 L-6.6 1.6 Z" fill="#fff"/></g>
<rect transform="translate(716.7 491.7) rotate(-90)" x="-11.3" y="-7.5" width="22.6" height="15" rx="4.5" fill="#b41e2c" stroke="#8e1420" stroke-width="1.3" stroke-dasharray="1.3 1.1"/><rect transform="translate(716.7 490.6) rotate(-90)" x="-11.3" y="-7.5" width="22.6" height="15" rx="4.5" fill="#b41e2c"/><rect transform="translate(716.7 489.5) rotate(-90)" x="-11.3" y="-7.5" width="22.6" height="15" rx="4.5" fill="#b41e2c"/><rect transform="translate(716.7 488.4) rotate(-90)" x="-11.3" y="-7.5" width="22.6" height="15" rx="4.5" fill="#b41e2c"/><rect transform="translate(716.7 487.3) rotate(-90)" x="-11.3" y="-7.5" width="22.6" height="15" rx="4.5" fill="#b41e2c" stroke="#8e1420" stroke-width="1.3" stroke-dasharray="1.3 1.1"/><g transform="translate(716.7 487.3) rotate(-90)"><rect x="-11.3" y="-7.5" width="22.6" height="15" rx="4.5" fill="#e83040"/><rect x="-7.5" y="-6" width="14" height="12" rx="2.4" fill="#23245c"/><rect x="-5.2" y="-5.1" width="9.5" height="10.2" rx="1.6" fill="#f2707a"/><rect x="-4.5" y="-4.2" width="8.1" height="8.4" rx="1.4" fill="#e83040"/><path d="M-6.3 -1.5 L1.8 -1.5 L1.8 -3.9 L6.9 0 L1.8 3.9 L1.8 1.5 L-6.3 1.5 Z" fill="#fff"/></g>
<rect transform="translate(695.6 492.4) rotate(-90)" x="-11.5" y="-7.7" width="23" height="15.3" rx="4.6" fill="#1f9e2e" stroke="#167a22" stroke-width="1.3" stroke-dasharray="1.3 1.1"/><rect transform="translate(695.6 491.3) rotate(-90)" x="-11.5" y="-7.7" width="23" height="15.3" rx="4.6" fill="#1f9e2e"/><rect transform="translate(695.6 490.2) rotate(-90)" x="-11.5" y="-7.7" width="23" height="15.3" rx="4.6" fill="#1f9e2e"/><rect transform="translate(695.6 489.1) rotate(-90)" x="-11.5" y="-7.7" width="23" height="15.3" rx="4.6" fill="#1f9e2e"/><rect transform="translate(695.6 488) rotate(-90)" x="-11.5" y="-7.7" width="23" height="15.3" rx="4.6" fill="#1f9e2e" stroke="#167a22" stroke-width="1.3" stroke-dasharray="1.3 1.1"/><g transform="translate(695.6 488) rotate(-90)"><rect x="-11.5" y="-7.7" width="23" height="15.3" rx="4.6" fill="#30cc3e"/><rect x="-7.6" y="-6.1" width="14.3" height="12.2" rx="2.4" fill="#23245c"/><rect x="-5.3" y="-5.2" width="9.7" height="10.4" rx="1.6" fill="#66e470"/><rect x="-4.6" y="-4.3" width="8.3" height="8.6" rx="1.4" fill="#30cc3e"/><path d="M-6.4 -1.5 L1.8 -1.5 L1.8 -4 L7 0 L1.8 4 L1.8 1.5 L-6.4 1.5 Z" fill="#fff"/></g>
<rect transform="translate(759.3 500.1) rotate(-100)" x="-11.8" y="-7.1" width="23.7" height="14.2" rx="4.3" fill="#c9b012" stroke="#9a8a0c" stroke-width="1.3" stroke-dasharray="1.3 1.1"/><rect transform="translate(759.3 499) rotate(-100)" x="-11.8" y="-7.1" width="23.7" height="14.2" rx="4.3" fill="#c9b012"/><rect transform="translate(759.3 497.9) rotate(-100)" x="-11.8" y="-7.1" width="23.7" height="14.2" rx="4.3" fill="#c9b012"/><rect transform="translate(759.3 496.8) rotate(-100)" x="-11.8" y="-7.1" width="23.7" height="14.2" rx="4.3" fill="#c9b012"/><rect transform="translate(759.3 495.7) rotate(-100)" x="-11.8" y="-7.1" width="23.7" height="14.2" rx="4.3" fill="#c9b012" stroke="#9a8a0c" stroke-width="1.3" stroke-dasharray="1.3 1.1"/><g transform="translate(759.3 495.7) rotate(-100)"><rect x="-11.8" y="-7.1" width="23.7" height="14.2" rx="4.3" fill="#f4df28"/><rect x="-7.8" y="-5.7" width="14.7" height="11.4" rx="2.4" fill="#23245c"/><rect x="-5.4" y="-4.8" width="9.9" height="9.7" rx="1.6" fill="#fbf070"/><rect x="-4.7" y="-4" width="8.5" height="8" rx="1.4" fill="#f4df28"/><path d="M-6.6 -1.4 L2.4 -1.4 L2.4 -3.7 L7.2 0 L2.4 3.7 L2.4 1.4 L-6.6 1.4 Z" fill="#fff"/></g>
<rect transform="translate(796.3 500.1) rotate(-12)" x="-14.5" y="-6.8" width="29.1" height="13.7" rx="4.1" fill="#b41e2c" stroke="#8e1420" stroke-width="1.3" stroke-dasharray="1.3 1.1"/><rect transform="translate(796.3 499) rotate(-12)" x="-14.5" y="-6.8" width="29.1" height="13.7" rx="4.1" fill="#b41e2c"/><rect transform="translate(796.3 497.9) rotate(-12)" x="-14.5" y="-6.8" width="29.1" height="13.7" rx="4.1" fill="#b41e2c"/><rect transform="translate(796.3 496.8) rotate(-12)" x="-14.5" y="-6.8" width="29.1" height="13.7" rx="4.1" fill="#b41e2c"/><rect transform="translate(796.3 495.7) rotate(-12)" x="-14.5" y="-6.8" width="29.1" height="13.7" rx="4.1" fill="#b41e2c" stroke="#8e1420" stroke-width="1.3" stroke-dasharray="1.3 1.1"/><path transform="translate(796.3 498.2) rotate(-12)" d="M-11.5 6.8 L11.5 6.8" stroke="#17205a" stroke-width="1.7" stroke-dasharray="5 2" fill="none"/><g transform="translate(796.3 495.7) rotate(-12)"><rect x="-14.5" y="-6.8" width="29.1" height="13.7" rx="4.1" fill="#e83040"/><rect x="-9.6" y="-5.5" width="18" height="11" rx="2.4" fill="#23245c"/><rect x="-6.7" y="-4.7" width="12.2" height="9.3" rx="1.6" fill="#f2707a"/><rect x="-5.8" y="-3.8" width="10.5" height="7.7" rx="1.4" fill="#e83040"/><path d="M-8.1 -1.4 L4 -1.4 L4 -3.6 L8.7 0 L4 3.6 L4 1.4 L-8.1 1.4 Z" fill="#fff"/></g>
<rect transform="translate(661.4 509.2) rotate(177)" x="-14.4" y="-5.8" width="28.8" height="11.6" rx="3.5" fill="#c9b012" stroke="#9a8a0c" stroke-width="1.3" stroke-dasharray="1.3 1.1"/><rect transform="translate(661.4 508.1) rotate(177)" x="-14.4" y="-5.8" width="28.8" height="11.6" rx="3.5" fill="#c9b012"/><rect transform="translate(661.4 507) rotate(177)" x="-14.4" y="-5.8" width="28.8" height="11.6" rx="3.5" fill="#c9b012"/><rect transform="translate(661.4 505.9) rotate(177)" x="-14.4" y="-5.8" width="28.8" height="11.6" rx="3.5" fill="#c9b012"/><rect transform="translate(661.4 504.8) rotate(177)" x="-14.4" y="-5.8" width="28.8" height="11.6" rx="3.5" fill="#c9b012" stroke="#9a8a0c" stroke-width="1.3" stroke-dasharray="1.3 1.1"/><path transform="translate(661.4 507.3) rotate(177)" d="M-11.4 -5.8 L11.4 -5.8" stroke="#17205a" stroke-width="1.7" stroke-dasharray="5 2" fill="none"/><g transform="translate(661.4 504.8) rotate(177)"><rect x="-14.4" y="-5.8" width="28.8" height="11.6" rx="3.5" fill="#f4df28"/><rect x="-9.5" y="-4.6" width="17.8" height="9.3" rx="2.4" fill="#23245c"/><rect x="-6.6" y="-3.9" width="12.1" height="7.9" rx="1.6" fill="#fbf070"/><rect x="-5.8" y="-3.2" width="10.4" height="6.5" rx="1.4" fill="#f4df28"/><path d="M-8.1 -1.2 L4.6 -1.2 L4.6 -3 L8.7 0 L4.6 3 L4.6 1.2 L-8.1 1.2 Z" fill="#fff"/></g>
<rect transform="translate(807.6 518.2) rotate(-8)" x="-18.7" y="-7" width="37.3" height="14" rx="4.2" fill="#1f9e2e" stroke="#167a22" stroke-width="1.3" stroke-dasharray="1.3 1.1"/><rect transform="translate(807.6 517) rotate(-8)" x="-18.7" y="-7" width="37.3" height="14" rx="4.2" fill="#1f9e2e"/><rect transform="translate(807.6 515.7) rotate(-8)" x="-18.7" y="-7" width="37.3" height="14" rx="4.2" fill="#1f9e2e"/><rect transform="translate(807.6 514.5) rotate(-8)" x="-18.7" y="-7" width="37.3" height="14" rx="4.2" fill="#1f9e2e"/><rect transform="translate(807.6 513.2) rotate(-8)" x="-18.7" y="-7" width="37.3" height="14" rx="4.2" fill="#1f9e2e" stroke="#167a22" stroke-width="1.3" stroke-dasharray="1.3 1.1"/><path transform="translate(807.6 516) rotate(-8)" d="M-15.7 7 L15.7 7" stroke="#17205a" stroke-width="1.7" stroke-dasharray="4.2 1.4" fill="none"/><g transform="translate(807.6 513.2) rotate(-8)"><rect x="-18.7" y="-7" width="37.3" height="14" rx="4.2" fill="#30cc3e"/><rect x="-17.5" y="-5.8" width="34.9" height="11.6" rx="3.4" fill="#66e470" opacity=".55"/><rect x="-16.1" y="-4.8" width="32.1" height="9.6" rx="2.5" fill="#30cc3e"/><path d="M-9 -1.4 L4.8 -1.4 L4.8 -3.7 L9.6 0 L4.8 3.7 L4.8 1.4 L-9 1.4 Z" fill="#fff"/></g>
<rect transform="translate(766.1 524.5) rotate(-90)" x="-10.8" y="-7.5" width="21.6" height="15" rx="4.5" fill="#1474c8" stroke="#1848b0" stroke-width="1.3" stroke-dasharray="1.3 1.1"/><rect transform="translate(766.1 523.4) rotate(-90)" x="-10.8" y="-7.5" width="21.6" height="15" rx="4.5" fill="#1474c8"/><rect transform="translate(766.1 522.3) rotate(-90)" x="-10.8" y="-7.5" width="21.6" height="15" rx="4.5" fill="#1474c8"/><rect transform="translate(766.1 521.2) rotate(-90)" x="-10.8" y="-7.5" width="21.6" height="15" rx="4.5" fill="#1474c8"/><rect transform="translate(766.1 520.1) rotate(-90)" x="-10.8" y="-7.5" width="21.6" height="15" rx="4.5" fill="#1474c8" stroke="#1848b0" stroke-width="1.3" stroke-dasharray="1.3 1.1"/><g transform="translate(766.1 520.1) rotate(-90)"><rect x="-10.8" y="-7.5" width="21.6" height="15" rx="4.5" fill="#1fa6ee"/><rect x="-7.1" y="-6" width="13.4" height="12" rx="2.4" fill="#23245c"/><rect x="-5" y="-5.1" width="9.1" height="10.2" rx="1.6" fill="#5cc8fa"/><rect x="-4.3" y="-4.2" width="7.8" height="8.4" rx="1.4" fill="#1fa6ee"/><path d="M-6 -1.5 L1.5 -1.5 L1.5 -3.9 L6.6 0 L1.5 3.9 L1.5 1.5 L-6 1.5 Z" fill="#fff"/></g>
<rect transform="translate(691 524.9) rotate(-90)" x="-12.3" y="-8.5" width="24.6" height="17" rx="5.1" fill="#b41e2c" stroke="#8e1420" stroke-width="1.3" stroke-dasharray="1.3 1.1"/><rect transform="translate(691 523.8) rotate(-90)" x="-12.3" y="-8.5" width="24.6" height="17" rx="5.1" fill="#b41e2c"/><rect transform="translate(691 522.7) rotate(-90)" x="-12.3" y="-8.5" width="24.6" height="17" rx="5.1" fill="#b41e2c"/><rect transform="translate(691 521.6) rotate(-90)" x="-12.3" y="-8.5" width="24.6" height="17" rx="5.1" fill="#b41e2c"/><rect transform="translate(691 520.5) rotate(-90)" x="-12.3" y="-8.5" width="24.6" height="17" rx="5.1" fill="#b41e2c" stroke="#8e1420" stroke-width="1.3" stroke-dasharray="1.3 1.1"/><g transform="translate(691 520.5) rotate(-90)"><rect x="-12.3" y="-8.5" width="24.6" height="17" rx="5.1" fill="#e83040"/><rect x="-8.1" y="-6.8" width="15.3" height="13.6" rx="2.4" fill="#23245c"/><rect x="-5.7" y="-5.8" width="10.3" height="11.6" rx="1.6" fill="#f2707a"/><rect x="-4.9" y="-4.8" width="8.9" height="9.5" rx="1.4" fill="#e83040"/><path d="M-6.9 -1.7 L1.8 -1.7 L1.8 -4.4 L7.5 0 L1.8 4.4 L1.8 1.7 L-6.9 1.7 Z" fill="#fff"/></g>
<rect transform="translate(657 528) rotate(172)" x="-18.7" y="-6.5" width="37.3" height="13" rx="3.9" fill="#1474c8" stroke="#1848b0" stroke-width="1.3" stroke-dasharray="1.3 1.1"/><rect transform="translate(657 526.8) rotate(172)" x="-18.7" y="-6.5" width="37.3" height="13" rx="3.9" fill="#1474c8"/><rect transform="translate(657 525.5) rotate(172)" x="-18.7" y="-6.5" width="37.3" height="13" rx="3.9" fill="#1474c8"/><rect transform="translate(657 524.2) rotate(172)" x="-18.7" y="-6.5" width="37.3" height="13" rx="3.9" fill="#1474c8"/><rect transform="translate(657 523) rotate(172)" x="-18.7" y="-6.5" width="37.3" height="13" rx="3.9" fill="#1474c8" stroke="#1848b0" stroke-width="1.3" stroke-dasharray="1.3 1.1"/><path transform="translate(657 525.8) rotate(172)" d="M-15.7 -6.5 L15.7 -6.5" stroke="#17205a" stroke-width="1.7" stroke-dasharray="4.2 1.4" fill="none"/><g transform="translate(657 523) rotate(172)"><rect x="-18.7" y="-6.5" width="37.3" height="13" rx="3.9" fill="#1fa6ee"/><rect x="-17.5" y="-5.3" width="34.9" height="10.6" rx="3.1" fill="#5cc8fa" opacity=".55"/><rect x="-16.1" y="-4.3" width="32.1" height="8.6" rx="2.3" fill="#1fa6ee"/><path d="M-9 -1.3 L5.1 -1.3 L5.1 -3.4 L9.6 0 L5.1 3.4 L5.1 1.3 L-9 1.3 Z" fill="#fff"/></g>
<rect transform="translate(708.8 529.4) rotate(-90)" x="-17.5" y="-8.2" width="35" height="16.5" rx="5" fill="#1f9e2e" stroke="#167a22" stroke-width="1.3" stroke-dasharray="1.3 1.1"/><rect transform="translate(708.8 528.1) rotate(-90)" x="-17.5" y="-8.2" width="35" height="16.5" rx="5" fill="#1f9e2e"/><rect transform="translate(708.8 526.9) rotate(-90)" x="-17.5" y="-8.2" width="35" height="16.5" rx="5" fill="#1f9e2e"/><rect transform="translate(708.8 525.6) rotate(-90)" x="-17.5" y="-8.2" width="35" height="16.5" rx="5" fill="#1f9e2e"/><rect transform="translate(708.8 524.4) rotate(-90)" x="-17.5" y="-8.2" width="35" height="16.5" rx="5" fill="#1f9e2e" stroke="#167a22" stroke-width="1.3" stroke-dasharray="1.3 1.1"/><g transform="translate(708.8 524.4) rotate(-90)"><rect x="-17.5" y="-8.2" width="35" height="16.5" rx="5" fill="#30cc3e"/><rect x="-16.3" y="-7" width="32.6" height="14.1" rx="4" fill="#66e470" opacity=".55"/><rect x="-14.9" y="-6" width="29.8" height="12.1" rx="3" fill="#30cc3e"/><path d="M-8.8 -1.7 L3.8 -1.7 L3.8 -4.3 L9.3 0 L3.8 4.3 L3.8 1.7 L-8.8 1.7 Z" fill="#fff"/></g>
<rect transform="translate(728.7 531.5) rotate(-90)" x="-22.5" y="-7.8" width="45" height="15.5" rx="4.6" fill="#c9b012" stroke="#9a8a0c" stroke-width="1.3" stroke-dasharray="1.3 1.1"/><rect transform="translate(728.7 530.2) rotate(-90)" x="-22.5" y="-7.8" width="45" height="15.5" rx="4.6" fill="#c9b012"/><rect transform="translate(728.7 529) rotate(-90)" x="-22.5" y="-7.8" width="45" height="15.5" rx="4.6" fill="#c9b012"/><rect transform="translate(728.7 527.8) rotate(-90)" x="-22.5" y="-7.8" width="45" height="15.5" rx="4.6" fill="#c9b012"/><rect transform="translate(728.7 526.5) rotate(-90)" x="-22.5" y="-7.8" width="45" height="15.5" rx="4.6" fill="#c9b012" stroke="#9a8a0c" stroke-width="1.3" stroke-dasharray="1.3 1.1"/><g transform="translate(728.7 526.5) rotate(-90)"><rect x="-22.5" y="-7.8" width="45" height="15.5" rx="4.6" fill="#f4df28"/><rect x="-21.3" y="-6.5" width="42.6" height="13.1" rx="3.7" fill="#fbf070" opacity=".55"/><rect x="-19.9" y="-5.5" width="39.8" height="11.1" rx="2.8" fill="#f4df28"/><path d="M-9 -1.6 L4.3 -1.6 L4.3 -4 L9.6 0 L4.3 4 L4.3 1.6 L-9 1.6 Z" fill="#fff"/></g>
<rect transform="translate(748 532.5) rotate(-90)" x="-17.5" y="-8" width="35" height="16" rx="4.8" fill="#c9b012" stroke="#9a8a0c" stroke-width="1.3" stroke-dasharray="1.3 1.1"/><rect transform="translate(748 531.2) rotate(-90)" x="-17.5" y="-8" width="35" height="16" rx="4.8" fill="#c9b012"/><rect transform="translate(748 530) rotate(-90)" x="-17.5" y="-8" width="35" height="16" rx="4.8" fill="#c9b012"/><rect transform="translate(748 528.8) rotate(-90)" x="-17.5" y="-8" width="35" height="16" rx="4.8" fill="#c9b012"/><rect transform="translate(748 527.5) rotate(-90)" x="-17.5" y="-8" width="35" height="16" rx="4.8" fill="#c9b012" stroke="#9a8a0c" stroke-width="1.3" stroke-dasharray="1.3 1.1"/><g transform="translate(748 527.5) rotate(-90)"><rect x="-17.5" y="-8" width="35" height="16" rx="4.8" fill="#f4df28"/><rect x="-16.3" y="-6.8" width="32.6" height="13.6" rx="3.8" fill="#fbf070" opacity=".55"/><rect x="-14.9" y="-5.8" width="29.8" height="11.6" rx="2.9" fill="#f4df28"/><path d="M-8.8 -1.6 L3.9 -1.6 L3.9 -4.2 L9.3 0 L3.9 4.2 L3.9 1.6 L-8.8 1.6 Z" fill="#fff"/></g>
<rect transform="translate(804.7 547.2) rotate(32)" x="-20.2" y="-7.4" width="40.4" height="14.8" rx="4.4" fill="#c9b012" stroke="#9a8a0c" stroke-width="1.3" stroke-dasharray="1.3 1.1"/><rect transform="translate(804.7 546) rotate(32)" x="-20.2" y="-7.4" width="40.4" height="14.8" rx="4.4" fill="#c9b012"/><rect transform="translate(804.7 544.7) rotate(32)" x="-20.2" y="-7.4" width="40.4" height="14.8" rx="4.4" fill="#c9b012"/><rect transform="translate(804.7 543.5) rotate(32)" x="-20.2" y="-7.4" width="40.4" height="14.8" rx="4.4" fill="#c9b012"/><rect transform="translate(804.7 542.2) rotate(32)" x="-20.2" y="-7.4" width="40.4" height="14.8" rx="4.4" fill="#c9b012" stroke="#9a8a0c" stroke-width="1.3" stroke-dasharray="1.3 1.1"/><path transform="translate(804.7 545) rotate(32)" d="M-17.2 7.4 L17.2 7.4" stroke="#17205a" stroke-width="1.4" stroke-dasharray="4.2 1.4" fill="none"/><g transform="translate(804.7 542.2) rotate(32)"><rect x="-20.2" y="-7.4" width="40.4" height="14.8" rx="4.4" fill="#f4df28"/><rect x="-19" y="-6.2" width="38" height="12.4" rx="3.5" fill="#fbf070" opacity=".55"/><rect x="-17.6" y="-5.2" width="35.2" height="10.4" rx="2.7" fill="#f4df28"/><path d="M-9 -1.5 L4.6 -1.5 L4.6 -3.8 L9.6 0 L4.6 3.8 L4.6 1.5 L-9 1.5 Z" fill="#fff"/></g>
<rect transform="translate(664.9 548.7) rotate(155)" x="-19.9" y="-6.7" width="39.9" height="13.5" rx="4" fill="#c9b012" stroke="#9a8a0c" stroke-width="1.3" stroke-dasharray="1.3 1.1"/><rect transform="translate(664.9 547.5) rotate(155)" x="-19.9" y="-6.7" width="39.9" height="13.5" rx="4" fill="#c9b012"/><rect transform="translate(664.9 546.2) rotate(155)" x="-19.9" y="-6.7" width="39.9" height="13.5" rx="4" fill="#c9b012"/><rect transform="translate(664.9 545) rotate(155)" x="-19.9" y="-6.7" width="39.9" height="13.5" rx="4" fill="#c9b012"/><rect transform="translate(664.9 543.7) rotate(155)" x="-19.9" y="-6.7" width="39.9" height="13.5" rx="4" fill="#c9b012" stroke="#9a8a0c" stroke-width="1.3" stroke-dasharray="1.3 1.1"/><path transform="translate(664.9 546.5) rotate(155)" d="M-16.9 -6.7 L16.9 -6.7" stroke="#17205a" stroke-width="1.5" stroke-dasharray="4.2 1.4" fill="none"/><g transform="translate(664.9 543.7) rotate(155)"><rect x="-19.9" y="-6.7" width="39.9" height="13.5" rx="4" fill="#f4df28"/><rect x="-18.7" y="-5.5" width="37.5" height="11.1" rx="3.2" fill="#fbf070" opacity=".55"/><rect x="-17.3" y="-4.5" width="34.7" height="9.1" rx="2.4" fill="#f4df28"/><path d="M-9 -1.3 L5 -1.3 L5 -3.5 L9.6 0 L5 3.5 L5 1.3 L-9 1.3 Z" fill="#fff"/></g>
<rect transform="translate(786.3 562.9) rotate(55)" x="-15.2" y="-7.5" width="30.4" height="15" rx="4.5" fill="#b41e2c" stroke="#8e1420" stroke-width="1.3" stroke-dasharray="1.3 1.1"/><rect transform="translate(786.3 561.8) rotate(55)" x="-15.2" y="-7.5" width="30.4" height="15" rx="4.5" fill="#b41e2c"/><rect transform="translate(786.3 560.7) rotate(55)" x="-15.2" y="-7.5" width="30.4" height="15" rx="4.5" fill="#b41e2c"/><rect transform="translate(786.3 559.6) rotate(55)" x="-15.2" y="-7.5" width="30.4" height="15" rx="4.5" fill="#b41e2c"/><rect transform="translate(786.3 558.5) rotate(55)" x="-15.2" y="-7.5" width="30.4" height="15" rx="4.5" fill="#b41e2c" stroke="#8e1420" stroke-width="1.3" stroke-dasharray="1.3 1.1"/><path transform="translate(786.3 561) rotate(55)" d="M-12.2 7.5 L12.2 7.5" stroke="#17205a" stroke-width="1" stroke-dasharray="5 2" fill="none"/><g transform="translate(786.3 558.5) rotate(55)"><rect x="-15.2" y="-7.5" width="30.4" height="15" rx="4.5" fill="#e83040"/><rect x="-10" y="-6" width="18.8" height="12" rx="2.4" fill="#23245c"/><rect x="-7" y="-5.1" width="12.8" height="10.2" rx="1.6" fill="#f2707a"/><rect x="-6.1" y="-4.2" width="10.9" height="8.4" rx="1.4" fill="#e83040"/><path d="M-8.5 -1.5 L4 -1.5 L4 -3.9 L9.1 0 L4 3.9 L4 1.5 L-8.5 1.5 Z" fill="#fff"/></g>
<rect transform="translate(682.9 566.7) rotate(128)" x="-14.3" y="-7.1" width="28.5" height="14.3" rx="4.3" fill="#1474c8" stroke="#1848b0" stroke-width="1.3" stroke-dasharray="1.3 1.1"/><rect transform="translate(682.9 565.6) rotate(128)" x="-14.3" y="-7.1" width="28.5" height="14.3" rx="4.3" fill="#1474c8"/><rect transform="translate(682.9 564.5) rotate(128)" x="-14.3" y="-7.1" width="28.5" height="14.3" rx="4.3" fill="#1474c8"/><rect transform="translate(682.9 563.4) rotate(128)" x="-14.3" y="-7.1" width="28.5" height="14.3" rx="4.3" fill="#1474c8"/><rect transform="translate(682.9 562.3) rotate(128)" x="-14.3" y="-7.1" width="28.5" height="14.3" rx="4.3" fill="#1474c8" stroke="#1848b0" stroke-width="1.3" stroke-dasharray="1.3 1.1"/><path transform="translate(682.9 564.8) rotate(128)" d="M-11.3 -7.1 L11.3 -7.1" stroke="#17205a" stroke-width="1" stroke-dasharray="5 2" fill="none"/><g transform="translate(682.9 562.3) rotate(128)"><rect x="-14.3" y="-7.1" width="28.5" height="14.3" rx="4.3" fill="#1fa6ee"/><rect x="-9.4" y="-5.7" width="17.7" height="11.4" rx="2.4" fill="#23245c"/><rect x="-6.6" y="-4.9" width="12" height="9.7" rx="1.6" fill="#5cc8fa"/><rect x="-5.7" y="-4" width="10.3" height="8" rx="1.4" fill="#1fa6ee"/><path d="M-8 -1.4 L3.7 -1.4 L3.7 -3.7 L8.6 0 L3.7 3.7 L3.7 1.4 L-8 1.4 Z" fill="#fff"/></g>
<rect transform="translate(767.7 574.2) rotate(72)" x="-14.4" y="-7.8" width="28.8" height="15.6" rx="4.7" fill="#1474c8" stroke="#1848b0" stroke-width="1.3" stroke-dasharray="1.3 1.1"/><rect transform="translate(767.7 573.1) rotate(72)" x="-14.4" y="-7.8" width="28.8" height="15.6" rx="4.7" fill="#1474c8"/><rect transform="translate(767.7 572) rotate(72)" x="-14.4" y="-7.8" width="28.8" height="15.6" rx="4.7" fill="#1474c8"/><rect transform="translate(767.7 570.9) rotate(72)" x="-14.4" y="-7.8" width="28.8" height="15.6" rx="4.7" fill="#1474c8"/><rect transform="translate(767.7 569.8) rotate(72)" x="-14.4" y="-7.8" width="28.8" height="15.6" rx="4.7" fill="#1474c8" stroke="#1848b0" stroke-width="1.3" stroke-dasharray="1.3 1.1"/><path transform="translate(767.7 572.3) rotate(72)" d="M-11.4 7.8 L11.4 7.8" stroke="#17205a" stroke-width="0.5" stroke-dasharray="5 2" fill="none"/><g transform="translate(767.7 569.8) rotate(72)"><rect x="-14.4" y="-7.8" width="28.8" height="15.6" rx="4.7" fill="#1fa6ee"/><rect x="-9.5" y="-6.3" width="17.9" height="12.5" rx="2.4" fill="#23245c"/><rect x="-6.6" y="-5.3" width="12.1" height="10.6" rx="1.6" fill="#5cc8fa"/><rect x="-5.8" y="-4.4" width="10.4" height="8.8" rx="1.4" fill="#1fa6ee"/><path d="M-8.1 -1.6 L3.4 -1.6 L3.4 -4.1 L8.7 0 L3.4 4.1 L3.4 1.6 L-8.1 1.6 Z" fill="#fff"/></g>
<rect transform="translate(702.6 575.5) rotate(112)" x="-14" y="-7.2" width="27.9" height="14.4" rx="4.3" fill="#b41e2c" stroke="#8e1420" stroke-width="1.3" stroke-dasharray="1.3 1.1"/><rect transform="translate(702.6 574.4) rotate(112)" x="-14" y="-7.2" width="27.9" height="14.4" rx="4.3" fill="#b41e2c"/><rect transform="translate(702.6 573.3) rotate(112)" x="-14" y="-7.2" width="27.9" height="14.4" rx="4.3" fill="#b41e2c"/><rect transform="translate(702.6 572.2) rotate(112)" x="-14" y="-7.2" width="27.9" height="14.4" rx="4.3" fill="#b41e2c"/><rect transform="translate(702.6 571.1) rotate(112)" x="-14" y="-7.2" width="27.9" height="14.4" rx="4.3" fill="#b41e2c" stroke="#8e1420" stroke-width="1.3" stroke-dasharray="1.3 1.1"/><path transform="translate(702.6 573.6) rotate(112)" d="M-11 -7.2 L11 -7.2" stroke="#17205a" stroke-width="0.6" stroke-dasharray="5 2" fill="none"/><g transform="translate(702.6 571.1) rotate(112)"><rect x="-14" y="-7.2" width="27.9" height="14.4" rx="4.3" fill="#e83040"/><rect x="-9.2" y="-5.7" width="17.3" height="11.5" rx="2.4" fill="#23245c"/><rect x="-6.4" y="-4.9" width="11.7" height="9.8" rx="1.6" fill="#f2707a"/><rect x="-5.6" y="-4" width="10.1" height="8" rx="1.4" fill="#e83040"/><path d="M-7.8 -1.4 L3.5 -1.4 L3.5 -3.7 L8.4 0 L3.5 3.7 L3.5 1.4 L-7.8 1.4 Z" fill="#fff"/></g>
<rect transform="translate(746.2 576.9) rotate(90)" x="-14.3" y="-8.5" width="28.6" height="17" rx="5.1" fill="#c9b012" stroke="#9a8a0c" stroke-width="1.3" stroke-dasharray="1.3 1.1"/><rect transform="translate(746.2 575.8) rotate(90)" x="-14.3" y="-8.5" width="28.6" height="17" rx="5.1" fill="#c9b012"/><rect transform="translate(746.2 574.7) rotate(90)" x="-14.3" y="-8.5" width="28.6" height="17" rx="5.1" fill="#c9b012"/><rect transform="translate(746.2 573.6) rotate(90)" x="-14.3" y="-8.5" width="28.6" height="17" rx="5.1" fill="#c9b012"/><rect transform="translate(746.2 572.5) rotate(90)" x="-14.3" y="-8.5" width="28.6" height="17" rx="5.1" fill="#c9b012" stroke="#9a8a0c" stroke-width="1.3" stroke-dasharray="1.3 1.1"/><g transform="translate(746.2 572.5) rotate(90)"><rect x="-14.3" y="-8.5" width="28.6" height="17" rx="5.1" fill="#f4df28"/><rect x="-9.4" y="-6.8" width="17.7" height="13.6" rx="2.4" fill="#23245c"/><rect x="-6.6" y="-5.8" width="12" height="11.6" rx="1.6" fill="#fbf070"/><rect x="-5.7" y="-4.8" width="10.3" height="9.5" rx="1.4" fill="#f4df28"/><path d="M-8 -1.7 L2.9 -1.7 L2.9 -4.4 L8.6 0 L2.9 4.4 L2.9 1.7 L-8 1.7 Z" fill="#fff"/></g>
<rect transform="translate(725.8 578.6) rotate(90)" x="-14.3" y="-8.5" width="28.6" height="17" rx="5.1" fill="#1474c8" stroke="#1848b0" stroke-width="1.3" stroke-dasharray="1.3 1.1"/><rect transform="translate(725.8 577.5) rotate(90)" x="-14.3" y="-8.5" width="28.6" height="17" rx="5.1" fill="#1474c8"/><rect transform="translate(725.8 576.4) rotate(90)" x="-14.3" y="-8.5" width="28.6" height="17" rx="5.1" fill="#1474c8"/><rect transform="translate(725.8 575.3) rotate(90)" x="-14.3" y="-8.5" width="28.6" height="17" rx="5.1" fill="#1474c8"/><rect transform="translate(725.8 574.2) rotate(90)" x="-14.3" y="-8.5" width="28.6" height="17" rx="5.1" fill="#1474c8" stroke="#1848b0" stroke-width="1.3" stroke-dasharray="1.3 1.1"/><g transform="translate(725.8 574.2) rotate(90)"><rect x="-14.3" y="-8.5" width="28.6" height="17" rx="5.1" fill="#1fa6ee"/><rect x="-9.4" y="-6.8" width="17.7" height="13.6" rx="2.4" fill="#23245c"/><rect x="-6.6" y="-5.8" width="12" height="11.6" rx="1.6" fill="#5cc8fa"/><rect x="-5.7" y="-4.8" width="10.3" height="9.5" rx="1.4" fill="#1fa6ee"/><path d="M-8 -1.7 L2.9 -1.7 L2.9 -4.4 L8.6 0 L2.9 4.4 L2.9 1.7 L-8 1.7 Z" fill="#fff"/></g>
</svg>
<div class="ov" style="left:2.3px;top:2px;width:42.6px;height:146px"></div>
<div class="abs" style="left:4.6px;top:20.2px;width:37.8px;height:20px;background:#3c3c3c;border-radius:2px 2px 0 0"></div>
<div class="abs" style="left:4.6px;top:41.2px;width:37.8px;height:20px;background:#3a5273;border-radius:0"></div>
<div class="abs" style="left:4.6px;top:62.2px;width:37.8px;height:20px;background:#3c3c3c;border-radius:0"></div>
<div class="abs" style="left:4.6px;top:83.2px;width:37.8px;height:20px;background:#3c3c3c;border-radius:0"></div>
<div class="abs" style="left:4.6px;top:104.2px;width:37.8px;height:20px;background:#3c3c3c;border-radius:0"></div>
<div class="abs" style="left:4.6px;top:125.2px;width:37.8px;height:20px;background:#3c3c3c;border-radius:0 0 2px 2px"></div>
<div class="ov" id="ainav" style="left:10px;top:517.8px;width:105px;height:94px;background:rgba(16,16,16,.93)"><div style="left:26.3px;top:2.4px;color:#b0b0b0">AI Navigation</div><div style="left:22.3px;top:18.8px">Surfaces</div><div style="left:22.3px;top:43.8px">Agents</div><div style="left:22.3px;top:68.6px">Obstacles</div></div>
<div class="ov" style="left:1.7px;top:643.8px;width:349.3px;height:26.2px;border-radius:4px"></div>
<div class="abs" style="left:17.5px;top:647px;width:32.4px;height:19.6px;background:#3a5273;border-radius:2px 0 0 2px"></div>
<div class="abs" style="left:51px;top:647px;width:31.4px;height:19.6px;background:#3a5273;border-radius:0"></div>
<div class="abs" style="left:84px;top:647px;width:31.4px;height:19.6px;background:#3a5273;border-radius:0"></div>
<div class="abs" style="left:117.3px;top:647px;width:31.4px;height:19.6px;background:#3a5273;border-radius:0"></div>
<div class="abs" style="left:150.2px;top:647px;width:31.4px;height:19.6px;background:#3a5273;border-radius:0"></div>
<div class="abs" style="left:183px;top:647px;width:31.4px;height:19.6px;background:#3c3c3c;border-radius:0"></div>
<div class="abs" style="left:216.4px;top:647px;width:31.4px;height:19.6px;background:#3a5273;border-radius:0"></div>
<div class="abs" style="left:249.3px;top:647px;width:31.4px;height:19.6px;background:#3c3c3c;border-radius:0"></div>
<div class="abs" style="left:282.3px;top:647px;width:31.4px;height:19.6px;background:#3a5273;border-radius:0"></div>
<div class="abs" style="left:315.2px;top:647px;width:31.4px;height:19.6px;background:#3c3c3c;border-radius:0 2px 2px 0"></div>
<div id="tip" class="abs" style="left:656.6px;top:562.4px">Niveau sup.</div>
<div class="abs" style="left:688.5px;top:95.4px;font-size:12.7px;color:#c4c4c4">Persp</div>
<div class="abs" style="left:755px;top:0;width:1px;height:673px;background:#2c2c2c"></div><svg width="756" height="673" viewBox="375 64 756 673"><path d="M391 72.8 H407 M391 75.8 H407" stroke="#7a7a7a" stroke-width="1"/><path d="M393.4 95.6 Q392 92.6 393.4 92.2 Q394.4 92 395.6 94.2 V88.6 Q395.6 87.4 396.6 87.4 Q397.5 87.4 397.5 88.6 V86.8 Q397.5 85.8 398.5 85.8 Q399.5 85.8 399.5 86.8 V87.8 Q399.5 86.8 400.5 86.8 Q401.5 86.8 401.5 87.8 V89.4 Q401.5 88.4 402.4 88.4 Q403.4 88.4 403.4 89.4 V96 Q403.4 100.6 399.6 100.6 H398.6 Q395.6 100.6 393.4 95.6 Z" fill="#bdbdbd"/><path d="M398.5 108.6 V113.4 M398.5 117 V121.6 M392 115.2 H396.6 M400.4 115.2 H405" stroke="#b9c9e2" stroke-width="1.2"/><path d="M396.4 110.6 L398.5 108 L400.6 110.6 M396.4 119.8 L398.5 122.4 L400.6 119.8 M394 113 L391.4 115.2 L394 117.4 M403 113 L405.6 115.2 L403 117.4" fill="none" stroke="#b9c9e2" stroke-width="1.2"/><path d="M392.6 139.4 A6.4 6.4 0 0 1 402.4 131.2 M404.4 133.2 A6.4 6.4 0 0 1 394.6 141.4" fill="none" stroke="#c4c4c4" stroke-width="1.1"/><path d="M399.2 131.8 H402.8 V128.4 M397.8 140.8 H394.2 V144.2" fill="none" stroke="#c4c4c4" stroke-width="1.1"/><rect x="392.6" y="151" width="12.6" height="12.6" fill="none" stroke="#c4c4c4" stroke-width="1"/><path d="M392.6 163.6 V158.6 H397.6 V163.6 M398.4 157.8 L402.6 153.6 M399.6 153.4 H402.8 V156.6" fill="none" stroke="#c4c4c4" stroke-width="1"/><rect x="393.4" y="173.2" width="10.2" height="10.2" fill="none" stroke="#c4c4c4" stroke-width="1" stroke-dasharray="3.4 3.4" stroke-dashoffset="1.7"/><g fill="#c4c4c4"><rect x="392" y="171.8" width="2.8" height="2.8"/><rect x="402.2" y="171.8" width="2.8" height="2.8"/><rect x="392" y="182" width="2.8" height="2.8"/><rect x="402.2" y="182" width="2.8" height="2.8"/></g><circle cx="398.5" cy="199.4" r="4.6" fill="none" stroke="#c4c4c4" stroke-width="1.1"/><path d="M398.5 192.6 V206.2 M391.8 199.4 H405.2" stroke="#c4c4c4" stroke-width="1"/><rect x="397" y="197.9" width="3" height="3" fill="#c4c4c4"/><path d="M392.4 195 V193.2 H394.2 M402.8 193.2 H404.6 V195 M404.6 203.8 V205.6 H402.8 M394.2 205.6 H392.4 V203.8" fill="none" stroke="#c4c4c4" stroke-width="1"/><path d="M390 589.4 H406 M390 592.4 H406" stroke="#8a8a8a" stroke-width="1"/><path d="M394.8 603.6 v8 l6.4 -4 z" fill="#6e6e6e"/><path d="M394.8 628.6 v8 l6.4 -4 z" fill="#6e6e6e"/><path d="M394.8 653.6 v8 l6.4 -4 z" fill="#6e6e6e"/><path d="M382.4 713 V729 M385.6 713 V729" stroke="#5a5a5a" stroke-width="1.2"/><path d="M409.2 714.4 V727.2 M402.8 720.8 H415.6" stroke="#a3b2cc" stroke-width="1.2"/><path d="M407.1 716.2 L409.2 713.8 L411.3 716.2 M407.1 725.4 L409.2 727.8 L411.3 725.4 M404.6 718.7 L402.2 720.8 L404.6 722.9 M413.8 718.7 L416.2 720.8 L413.8 722.9" fill="none" stroke="#a3b2cc" stroke-width="1.2"/><rect x="435.8" y="713.8" width="7" height="4" fill="#a3b2cc"/><rect x="443.4" y="713.8" width="5" height="4" fill="#8a9ab8"/><path d="M435.8 721.8 H448.4 M435.8 725.8 H448.4" stroke="#a3b2cc" stroke-width="1.3"/><path d="M444.4 719.8 v4 M439.8 723.8 v4" stroke="#a3b2cc" stroke-width="1.6"/><path d="M471.8 714.2 V727.4 M476.4 714.2 V727.4 M467.8 717.8 H481.4 M472.8 722.2 H481.4 M474.8 725.8 H481.4" stroke="#a3b2cc" stroke-width="1.1"/><path d="M468.2 727.4 L480.8 714.2" stroke="#a3b2cc" stroke-width="1.2"/><circle cx="507.8" cy="720.8" r="6.2" fill="#a3b2cc"/><circle cx="506.4" cy="719.2" r="4.3" fill="#3a5273"/><circle cx="507.8" cy="720.8" r="6.2" fill="none" stroke="#a3b2cc" stroke-width="1.2"/><circle cx="538" cy="716.2" r="2.4" fill="#a3b2cc"/><path d="M534.4 723.4 l7 -3.2 l7 3.2 l-7 3.2 z M538 721.8 l7 3.2 M545 721.8 l-7 3.2" fill="none" stroke="#a3b2cc" stroke-width="1.1"/><circle cx="572.6" cy="719.2" r="3.8" fill="none" stroke="#c4c4c4" stroke-width="1.4"/><path d="M575.2 722.2 l4 4.4" stroke="#c4c4c4" stroke-width="1.6"/><rect x="605.2" y="718.8" width="4" height="4" fill="#a3b2cc"/><path d="M607.2 718.2 v-4.6 M607.2 723.4 v4.6 M604.6 720.8 h-4.6 M609.8 720.8 h4.6" stroke="#a3b2cc" stroke-width="1.1"/><path d="M605.4 715.8 l1.8 -2.2 l1.8 2.2 z M605.4 725.8 l1.8 2.2 l1.8 -2.2 z M602.2 719 l-2.2 1.8 l2.2 1.8 z M612.2 719 l2.2 1.8 l-2.2 1.8 z" fill="#a3b2cc"/><rect x="633.6" y="713.8" width="8" height="6.4" rx="1" fill="#b4b4b4"/><path d="M642 715.8 l3.4 -2 v6.4 l-3.4 -2 z" fill="#b4b4b4"/><path d="M637.6 724.8 q4.4 -4.4 8.8 0 q-4.4 4.4 -8.8 0 z" fill="#b4b4b4"/><circle cx="642" cy="724.8" r="1.3" fill="#3c3c3c"/><circle cx="673" cy="720.8" r="6.2" fill="none" stroke="#a3b2cc" stroke-width="1.3"/><path d="M677 716.8 l-5.4 2.6 l-2.6 5.4 l5.4 -2.6 z" fill="#a3b2cc"/><path d="M699 716.8 h3 l6 8 h3.6 M699 724.8 h3 l2 -2.6 M706.4 719.4 l2 -2.6 h3.6" fill="none" stroke="#8570d8" stroke-width="1.6"/><path d="M710.6 714.2 l3.4 2.6 l-3.4 2.6 z M710.6 722.2 l3.4 2.6 l-3.4 2.6 z" fill="#8570d8"/><path d="M1067.8 144.6 L1083.6 144.6 L1076.4 120 L1074.6 120 Z" fill="#a9a9a9"/><path d="M1069.5 122 L1075.5 133 L1081.5 122 Z" fill="#9a9a9a"/><rect x="1068.2" y="118.5" width="13.2" height="6" fill="#b4b4b4"/><rect x="1068.2" y="107.2" width="13.2" height="12.4" fill="#e6e6e6"/><path d="M1067 115.8 L1046.6 109.8 Q1045.4 116 1046.6 122.6 Z" fill="#d2d2d2"/><path d="M1083.4 115.6 L1102.6 109.4 Q1104.2 115.6 1102.6 121.8 Z" fill="#d8554b"/><path d="M1070 100.6 L1074.8 110 L1079.8 100.6 Z" fill="#3d8f3a"/><ellipse cx="1074.9" cy="96.2" rx="8.9" ry="6" fill="#7ddc4a"/><ellipse cx="1074.2" cy="95.4" rx="6.4" ry="4" fill="#8ee858"/><text x="1071.6" y="86.6" font-family="Liberation Sans, sans-serif" font-size="12" font-weight="bold" fill="#f0f0f0">y</text><text x="1105" y="119" font-family="Liberation Sans, sans-serif" font-size="12" font-weight="bold" fill="#f0f0f0">x</text><path d="M1109.6 84.6 V83 Q1109.6 80.8 1107.4 80.8 Q1105.4 80.8 1105 82.4" fill="none" stroke="#e8e8e8" stroke-width="1.2"/><rect x="1103.8" y="84.6" width="7" height="4.4" fill="#e8e8e8"/><path d="M1060.2 161.8 L1050.4 166.2 L1060.2 170.6 M1050.4 166.2 H1060.2" fill="none" stroke="#c4c4c4" stroke-width="1"/></svg>
</div>
<div id="bottombar" class="abs"><div></div></div>

</body>
</html>
